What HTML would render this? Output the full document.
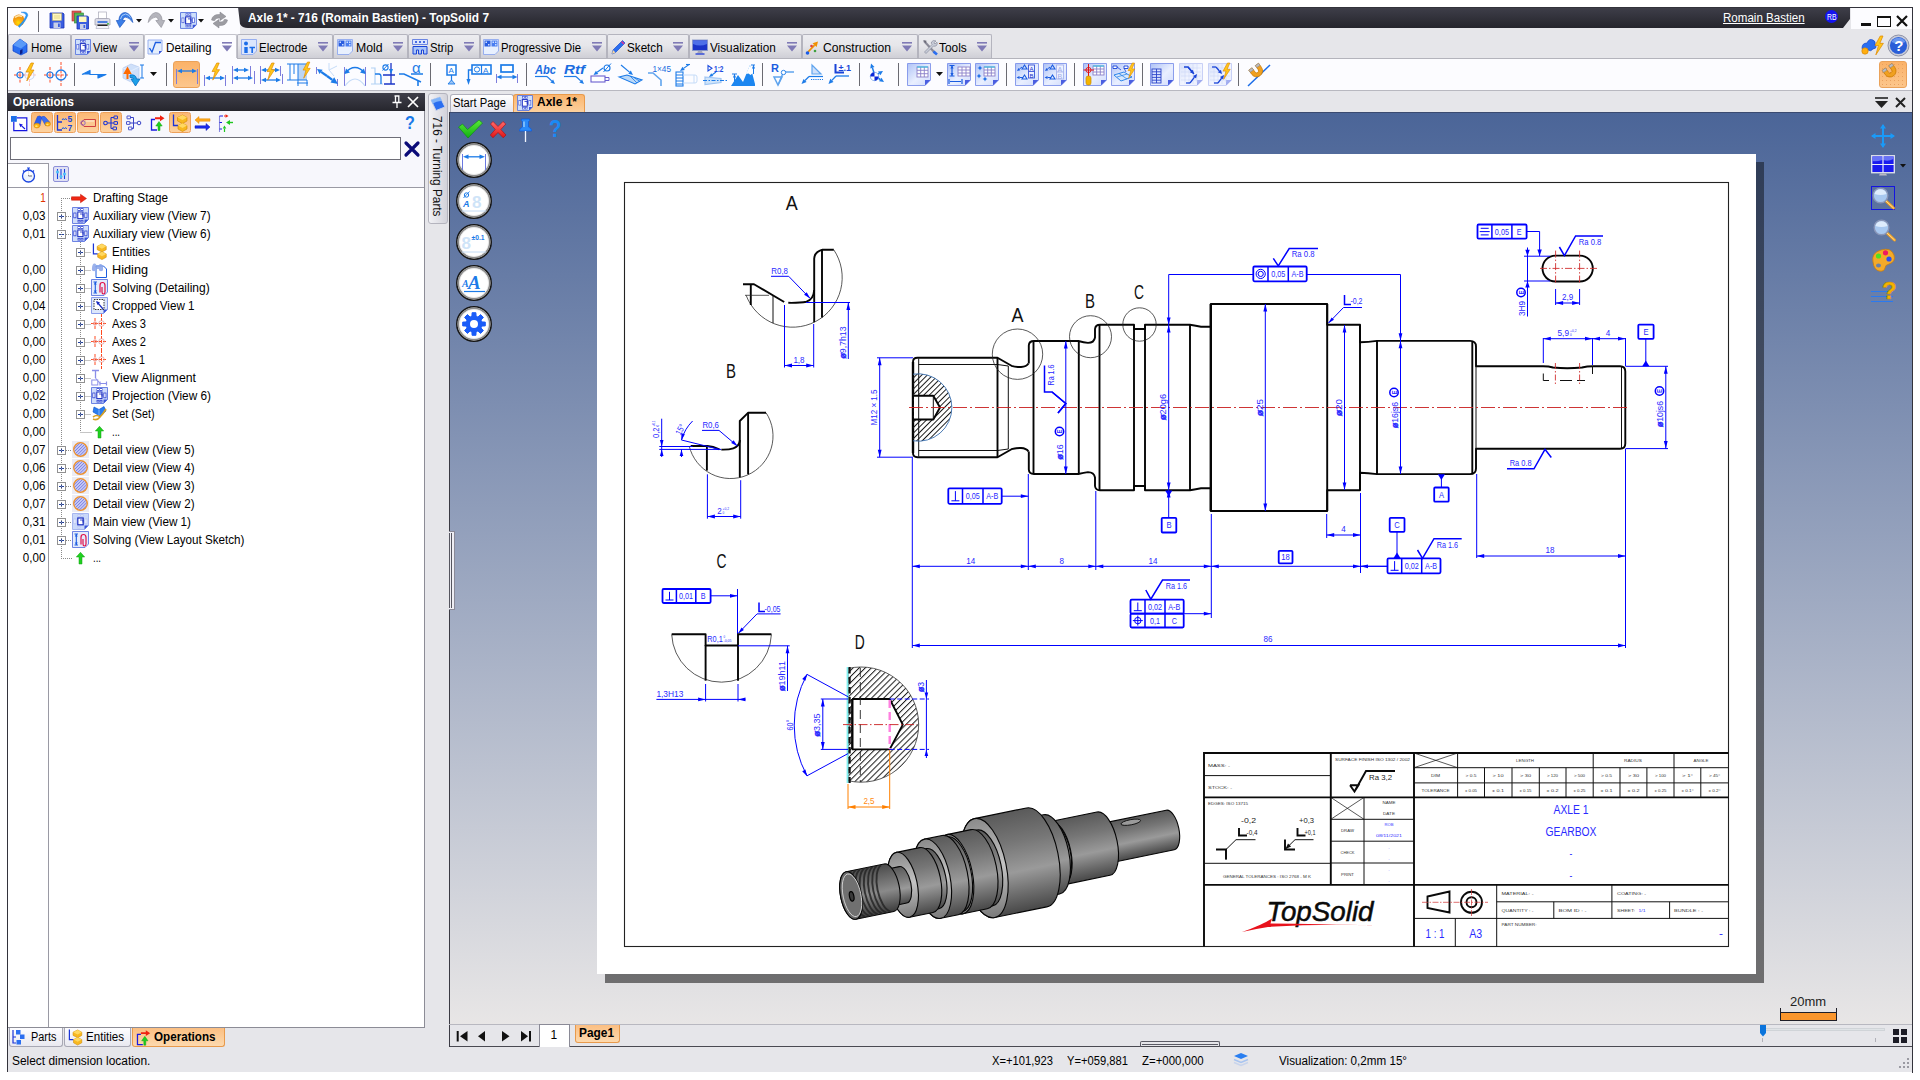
<!DOCTYPE html><html><head><meta charset="utf-8"><title>TopSolid</title><style>
*{box-sizing:border-box;margin:0;padding:0}
html,body{width:1920px;height:1080px;overflow:hidden;background:#fff;font-family:"Liberation Sans",sans-serif;}
.t{position:absolute;white-space:nowrap;display:block}
.a{position:absolute}
svg{position:absolute;overflow:visible}
</style></head><body><div class="a" style="left:7px;top:7px;width:1906px;height:1065px;background:#e6e6ea;"></div>
<div class="a" style="left:7px;top:7px;width:1px;height:1065px;background:#33333b;"></div>
<div class="a" style="left:1911.5px;top:7px;width:1.5px;height:1066px;background:#33333b;"></div>
<div class="a" style="left:8px;top:8px;width:232px;height:26px;background:#fcfcff;"></div>
<svg style="left:230px;top:7px;" width="1630" height="22" viewBox="0 0 1630 22"><defs><linearGradient id="tg" x1="0" y1="0" x2="0" y2="1"><stop offset="0" stop-color="#3f3f4a"/><stop offset="1" stop-color="#25252c"/></linearGradient></defs><path d="M0 0 H1620 V12 L1613 21 H18 Q12 21 10 17 L8 0 Z" fill="url(#tg)"/></svg>
<div class="a" style="left:7px;top:7px;width:1906px;height:1px;background:#33333b;"></div>
<div class="a" style="left:1851px;top:8px;width:61px;height:21px;background:#fcfcff;"></div>
<span class="t" style="top:11.62px;font-size:12.5px;line-height:12.5px;color:#fff;font-weight:bold;left:248.00px;transform-origin:0 0;transform:scaleX(0.9489);">Axle 1* - 716 (Romain Bastien) - TopSolid 7</span>
<span class="t" style="top:12.34px;font-size:12px;line-height:12px;color:#fff;left:1722.70px;transform-origin:0 0;transform:scaleX(0.9633);text-decoration:underline;">Romain Bastien</span>
<div class="a" style="left:1824.5px;top:10px;width:13px;height:13px;background:#1414f0;border-radius:50%;"></div>
<span class="t" style="top:12.80px;font-size:8.5px;line-height:8.5px;color:#fff;left:1826.50px;transform-origin:0 0;transform:scaleX(0.8046);">RB</span>
<div class="a" style="left:1861px;top:23px;width:10px;height:3px;background:#111;"></div>
<div class="a" style="left:1877px;top:16px;width:14px;height:10.5px;border:1.5px solid #111;border-top-width:2.5px;"></div>
<svg style="left:1896px;top:15px;" width="12" height="12" viewBox="0 0 12 12"><path d="M1 1 L11 11 M11 1 L1 11" stroke="#111" stroke-width="2.2" fill="none"/></svg>
<div class="a" style="left:8px;top:34px;width:63px;height:24px;background:linear-gradient(#ececf0,#e6e6ea 45%,#cfcfd6);border:1px solid #b4b4be;border-bottom:none;border-radius:2px 2px 0 0;"></div>
<span class="t" style="top:41.72px;font-size:12.5px;line-height:12.5px;color:#000;left:30.70px;transform-origin:0 0;transform:scaleX(0.9298);">Home</span>
<div class="a" style="left:71px;top:34px;width:73px;height:24px;background:linear-gradient(#ececf0,#e6e6ea 45%,#cfcfd6);border:1px solid #b4b4be;border-bottom:none;border-radius:2px 2px 0 0;"></div>
<span class="t" style="top:41.72px;font-size:12.5px;line-height:12.5px;color:#000;left:93.30px;transform-origin:0 0;transform:scaleX(0.8933);">View</span>
<svg style="left:128.6px;top:42px;" width="10" height="10" viewBox="0 0 10 10"><path d="M0 0.8 H10" stroke="#7f7ab5" stroke-width="1.6"/><path d="M0 3.6 H10 L5 9.4 Z" fill="#7f7ab5"/></svg>
<div class="a" style="left:144px;top:34px;width:93px;height:25px;background:#fcfcff;border:1px solid #c4c4cc;border-bottom:none;border-radius:2px 2px 0 0;"></div>
<span class="t" style="top:41.72px;font-size:12.5px;line-height:12.5px;color:#000;left:165.70px;transform-origin:0 0;transform:scaleX(0.9376);">Detailing</span>
<svg style="left:222px;top:42px;" width="10" height="10" viewBox="0 0 10 10"><path d="M0 0.8 H10" stroke="#7f7ab5" stroke-width="1.6"/><path d="M0 3.6 H10 L5 9.4 Z" fill="#7f7ab5"/></svg>
<div class="a" style="left:237px;top:34px;width:96px;height:24px;background:linear-gradient(#ececf0,#e6e6ea 45%,#cfcfd6);border:1px solid #b4b4be;border-bottom:none;border-radius:2px 2px 0 0;"></div>
<span class="t" style="top:41.72px;font-size:12.5px;line-height:12.5px;color:#000;left:259.30px;transform-origin:0 0;transform:scaleX(0.9166);">Electrode</span>
<svg style="left:318px;top:42px;" width="10" height="10" viewBox="0 0 10 10"><path d="M0 0.8 H10" stroke="#7f7ab5" stroke-width="1.6"/><path d="M0 3.6 H10 L5 9.4 Z" fill="#7f7ab5"/></svg>
<div class="a" style="left:333px;top:34px;width:75px;height:24px;background:linear-gradient(#ececf0,#e6e6ea 45%,#cfcfd6);border:1px solid #b4b4be;border-bottom:none;border-radius:2px 2px 0 0;"></div>
<span class="t" style="top:41.72px;font-size:12.5px;line-height:12.5px;color:#000;left:355.70px;transform-origin:0 0;transform:scaleX(0.9818);">Mold</span>
<svg style="left:393px;top:42px;" width="10" height="10" viewBox="0 0 10 10"><path d="M0 0.8 H10" stroke="#7f7ab5" stroke-width="1.6"/><path d="M0 3.6 H10 L5 9.4 Z" fill="#7f7ab5"/></svg>
<div class="a" style="left:408px;top:34px;width:72px;height:24px;background:linear-gradient(#ececf0,#e6e6ea 45%,#cfcfd6);border:1px solid #b4b4be;border-bottom:none;border-radius:2px 2px 0 0;"></div>
<span class="t" style="top:41.72px;font-size:12.5px;line-height:12.5px;color:#000;left:430.00px;transform-origin:0 0;transform:scaleX(0.9066);">Strip</span>
<svg style="left:464px;top:42px;" width="10" height="10" viewBox="0 0 10 10"><path d="M0 0.8 H10" stroke="#7f7ab5" stroke-width="1.6"/><path d="M0 3.6 H10 L5 9.4 Z" fill="#7f7ab5"/></svg>
<div class="a" style="left:480px;top:34px;width:127px;height:24px;background:linear-gradient(#ececf0,#e6e6ea 45%,#cfcfd6);border:1px solid #b4b4be;border-bottom:none;border-radius:2px 2px 0 0;"></div>
<span class="t" style="top:41.72px;font-size:12.5px;line-height:12.5px;color:#000;left:501.00px;transform-origin:0 0;transform:scaleX(0.9068);">Progressive Die</span>
<svg style="left:591.7px;top:42px;" width="10" height="10" viewBox="0 0 10 10"><path d="M0 0.8 H10" stroke="#7f7ab5" stroke-width="1.6"/><path d="M0 3.6 H10 L5 9.4 Z" fill="#7f7ab5"/></svg>
<div class="a" style="left:607px;top:34px;width:82px;height:24px;background:linear-gradient(#ececf0,#e6e6ea 45%,#cfcfd6);border:1px solid #b4b4be;border-bottom:none;border-radius:2px 2px 0 0;"></div>
<span class="t" style="top:41.72px;font-size:12.5px;line-height:12.5px;color:#000;left:627.00px;transform-origin:0 0;transform:scaleX(0.9342);">Sketch</span>
<svg style="left:673px;top:42px;" width="10" height="10" viewBox="0 0 10 10"><path d="M0 0.8 H10" stroke="#7f7ab5" stroke-width="1.6"/><path d="M0 3.6 H10 L5 9.4 Z" fill="#7f7ab5"/></svg>
<div class="a" style="left:689px;top:34px;width:113px;height:24px;background:linear-gradient(#ececf0,#e6e6ea 45%,#cfcfd6);border:1px solid #b4b4be;border-bottom:none;border-radius:2px 2px 0 0;"></div>
<span class="t" style="top:41.72px;font-size:12.5px;line-height:12.5px;color:#000;left:710.00px;transform-origin:0 0;transform:scaleX(0.9393);">Visualization</span>
<svg style="left:786.7px;top:42px;" width="10" height="10" viewBox="0 0 10 10"><path d="M0 0.8 H10" stroke="#7f7ab5" stroke-width="1.6"/><path d="M0 3.6 H10 L5 9.4 Z" fill="#7f7ab5"/></svg>
<div class="a" style="left:802px;top:34px;width:116px;height:24px;background:linear-gradient(#ececf0,#e6e6ea 45%,#cfcfd6);border:1px solid #b4b4be;border-bottom:none;border-radius:2px 2px 0 0;"></div>
<span class="t" style="top:41.72px;font-size:12.5px;line-height:12.5px;color:#000;left:822.70px;transform-origin:0 0;transform:scaleX(0.9691);">Construction</span>
<svg style="left:901.7px;top:42px;" width="10" height="10" viewBox="0 0 10 10"><path d="M0 0.8 H10" stroke="#7f7ab5" stroke-width="1.6"/><path d="M0 3.6 H10 L5 9.4 Z" fill="#7f7ab5"/></svg>
<div class="a" style="left:918px;top:34px;width:74px;height:24px;background:linear-gradient(#ececf0,#e6e6ea 45%,#cfcfd6);border:1px solid #b4b4be;border-bottom:none;border-radius:2px 2px 0 0;"></div>
<span class="t" style="top:41.72px;font-size:12.5px;line-height:12.5px;color:#000;left:939.00px;transform-origin:0 0;transform:scaleX(0.9493);">Tools</span>
<svg style="left:976.7px;top:42px;" width="10" height="10" viewBox="0 0 10 10"><path d="M0 0.8 H10" stroke="#7f7ab5" stroke-width="1.6"/><path d="M0 3.6 H10 L5 9.4 Z" fill="#7f7ab5"/></svg>
<div class="a" style="left:8px;top:58px;width:1904px;height:33px;background:#fcfcff;border-bottom:1px solid #b8b8c0;"></div>
<div class="a" style="left:8px;top:57.5px;width:136px;height:1px;background:#b4b4bc;"></div>
<div class="a" style="left:237px;top:57.5px;width:1675px;height:1px;background:#b4b4bc;"></div>
<div class="a" style="left:74px;top:63px;width:1px;height:23px;background:#6a6a72;"></div>
<div class="a" style="left:114px;top:63px;width:1px;height:23px;background:#6a6a72;"></div>
<div class="a" style="left:166px;top:63px;width:1px;height:23px;background:#6a6a72;"></div>
<div class="a" style="left:430px;top:63px;width:1px;height:23px;background:#6a6a72;"></div>
<div class="a" style="left:526px;top:63px;width:1px;height:23px;background:#6a6a72;"></div>
<div class="a" style="left:762.3px;top:63px;width:1px;height:23px;background:#6a6a72;"></div>
<div class="a" style="left:859px;top:63px;width:1px;height:23px;background:#6a6a72;"></div>
<div class="a" style="left:898.3px;top:63px;width:1px;height:23px;background:#6a6a72;"></div>
<div class="a" style="left:1006px;top:63px;width:1px;height:23px;background:#6a6a72;"></div>
<div class="a" style="left:1074.3px;top:63px;width:1px;height:23px;background:#6a6a72;"></div>
<div class="a" style="left:1142.3px;top:63px;width:1px;height:23px;background:#6a6a72;"></div>
<div class="a" style="left:1238.3px;top:63px;width:1px;height:23px;background:#6a6a72;"></div>
<div class="a" style="left:38px;top:11px;width:1px;height:21px;background:#6a6a72;"></div>
<svg width="0" height="0" style="left:0;top:0"><defs><linearGradient id="sg" x1="0" y1="0" x2="1" y2="1"><stop offset="0" stop-color="#aec2f6"/><stop offset="0.55" stop-color="#e9efff"/><stop offset="1" stop-color="#cfdafc"/></linearGradient></defs></svg>
<svg style="left:14px;top:62px" width="24" height="24" viewBox="0 0 24 24"><path d="M0 13H11M6 5V21" stroke="#ff3a10" stroke-width="0.9" stroke-dasharray="3 1.2" fill="none"/><circle cx="6" cy="13" r="3" fill="none" stroke="#1c7be8" stroke-width="1.2"/><circle cx="15.5" cy="13" r="4.5" fill="none" stroke="#c6d6f4" stroke-width="1.2"/><path d="M15.5 13V24M11 13H22" stroke="#ffc8c0" stroke-width="1" stroke-dasharray="3 1.2"/><g transform="translate(12,1) scale(1.0)"><path d="M5 0L0 9H3.3L0.8 18L8 7H4.6L7.6 0Z" fill="#ffc61a" stroke="#e08800" stroke-width="0.7" stroke-linejoin="round"/></g></svg>
<svg style="left:44px;top:62px" width="24" height="24" viewBox="0 0 24 24"><path d="M0 13H24M6 5V21M17 0V24" stroke="#ff3a10" stroke-width="0.9" stroke-dasharray="3 1.2" fill="none"/><circle cx="6" cy="13" r="3" fill="none" stroke="#1c7be8" stroke-width="1.2"/><circle cx="17" cy="13" r="5" fill="none" stroke="#1c7be8" stroke-width="1.3"/></svg>
<svg style="left:82px;top:62px" width="24" height="24" viewBox="0 0 24 24"><path d="M0 12.5L8 8.5V12.5H24L16 16V12.5" fill="#1c7be8" stroke="#1c7be8" stroke-width="1.2" stroke-linejoin="round"/></svg>
<svg style="left:121px;top:62px" width="26" height="24" viewBox="0 0 26 24"><path d="M2 6L10 2L18 5V16L10 20L2 16Z" fill="#cfe0fa" stroke="#b4c8ee" stroke-width="0.7"/><path d="M10 9L18 5M10 9L2 6M10 9V20" stroke="#e8f0ff" stroke-width="0.8"/><path d="M6.5 17V10M4 11L6.5 6.5L9 11Z" stroke="#ff6a00" stroke-width="2" fill="#ff6a00"/><path d="M19 3H23M19 16H23M21 3V16" stroke="#1c7be8" stroke-width="1"/><path d="M9 13Q15 12 15.5 17H19L14.5 24L10 17H12.5Q12 15 9 15.5Z" fill="#1ea0e8" stroke="#0a6cc0" stroke-width="0.8"/></svg>
<svg style="left:150px;top:72px" width="8" height="5" viewBox="0 0 8 5"><path d="M0 0H7L3.5 4Z" fill="#111"/></svg>
<div class="a" style="left:173px;top:61px;width:27px;height:27px;background:linear-gradient(#fbb268,#fcc68c);border:1px solid #eaa25a;border-radius:3px"></div>
<svg style="left:175px;top:62px" width="24" height="24" viewBox="0 0 24 24"><path d="M1.5 7V22M22.5 7V22" stroke="#7d7ddc" stroke-width="1"/><path d="M6 9H18" stroke="#1c7be8" stroke-width="1.3"/><path d="M2 9l5 -2.2v4.4zM22 9l-5 -2.2v4.4z" fill="#1c7be8"/></svg>
<svg style="left:203px;top:62px" width="24" height="24" viewBox="0 0 24 24"><path d="M1.5 13V24M22.5 13V24" stroke="#7d7ddc" stroke-width="1"/><path d="M6 16H18" stroke="#1c7be8" stroke-width="1.3"/><path d="M2 16l5 -2.2v4.4zM22 16l-5 -2.2v4.4z" fill="#1c7be8"/><g transform="translate(9,1) scale(0.95)"><path d="M5 0L0 9H3.3L0.8 18L8 7H4.6L7.6 0Z" fill="#ffc61a" stroke="#e08800" stroke-width="0.7" stroke-linejoin="round"/></g></svg>
<svg style="left:231px;top:62px" width="24" height="24" viewBox="0 0 24 24"><path d="M1.5 4V22M19.5 4V15M23.5 9V22" stroke="#7d7ddc" stroke-width="1"/><path d="M6 8H14" stroke="#1c7be8" stroke-width="1.3"/><path d="M2 8l5 -2.2v4.4zM18 8l-5 -2.2v4.4z" fill="#1c7be8"/><path d="M6 16H18" stroke="#1c7be8" stroke-width="1.3"/><path d="M2 16l5 -2.2v4.4zM22 16l-5 -2.2v4.4z" fill="#1c7be8"/></svg>
<svg style="left:259px;top:62px" width="24" height="24" viewBox="0 0 24 24"><path d="M1.5 4V22M21.5 4V14M23.5 12V22" stroke="#7d7ddc" stroke-width="1"/><path d="M6 8H17" stroke="#1c7be8" stroke-width="1.3"/><path d="M2 8l5 -2.2v4.4zM21 8l-5 -2.2v4.4z" fill="#1c7be8"/><path d="M6 18H18" stroke="#1c7be8" stroke-width="1.3"/><path d="M2 18l5 -2.2v4.4zM22 18l-5 -2.2v4.4z" fill="#1c7be8"/><g transform="translate(8,1) scale(0.95)"><path d="M5 0L0 9H3.3L0.8 18L8 7H4.6L7.6 0Z" fill="#ffc61a" stroke="#e08800" stroke-width="0.7" stroke-linejoin="round"/></g></svg>
<svg style="left:287px;top:62px" width="24" height="24" viewBox="0 0 24 24"><rect x="11" y="2" width="9" height="16" fill="#bcd6f6"/><path d="M0 2H20M0 18H11M3 2V18M7 2V12M11 2V24M20 18V24M11 18H20M10 21H21" stroke="#1c7be8" stroke-width="1"/><g transform="translate(16,0) scale(0.9)"><path d="M5 0L0 9H3.3L0.8 18L8 7H4.6L7.6 0Z" fill="#ffc61a" stroke="#e08800" stroke-width="0.7" stroke-linejoin="round"/></g></svg>
<svg style="left:315px;top:62px" width="24" height="24" viewBox="0 0 24 24"><path d="M14 8V1M14 8L22 4M14 8L19 14" stroke="#c6dcf8" stroke-width="1"/><path d="M1.5 5V12M22.5 17V24" stroke="#7d7ddc" stroke-width="1"/><path d="M12 14L17.3 17.9" stroke="#1c7be8" stroke-width="2.2" fill="none"/><path d="M23 22L15.5 20.5L19.2 15.3Z" fill="#1c7be8"/><path d="M12 14L6.1 9.9" stroke="#1c7be8" stroke-width="2.2" fill="none"/><path d="M2 7L7.6 7.7L4.6 12.0Z" fill="#1c7be8"/></svg>
<svg style="left:343px;top:62px" width="24" height="24" viewBox="0 0 24 24"><path d="M1.5 5V24M22.5 5V24" stroke="#7d7ddc" stroke-width="1"/><path d="M2 11Q12 0 22 11" stroke="#1c7be8" stroke-width="1.6" fill="none"/><path d="M1.5 12L3 6.5L7 10.5ZM22.5 12L21 6.5L17 10.5Z" fill="#1c7be8"/><path d="M2 24Q12 10 22 24" stroke="#c6dcf8" stroke-width="1.2" fill="none"/></svg>
<svg style="left:371px;top:62px" width="24" height="24" viewBox="0 0 24 24"><path d="M0 6H4V22M0 22H12" stroke="#b0d0f4" stroke-width="1.2" fill="none" stroke-dasharray="0"/><path d="M4 12H8Q10 12 10 15V22" stroke="#1c7be8" stroke-width="1.3" fill="none"/><path d="M12 13H24M20 1V22M13 22H24" stroke="#1a34c8" stroke-width="1.3"/><circle cx="14.5" cy="5.5" r="2.6" fill="none" stroke="#1c7be8" stroke-width="1.1"/><path d="M11.5 8.5L17.5 2" stroke="#1c7be8" stroke-width="1"/><path d="M20 12l-2 -5h4z" fill="#1c7be8"/></svg>
<svg style="left:399px;top:62px" width="24" height="24" viewBox="0 0 24 24"><text x="13" y="11" font-size="15" fill="#1c7be8" font-family="Liberation Sans">α</text><path d="M0 12H5L22 20M12 12H24" stroke="#1c7be8" stroke-width="1.5" fill="none"/><path d="M19 19V24" stroke="#1c7be8" stroke-width="1.6"/></svg>
<svg style="left:445px;top:62px" width="14" height="24" viewBox="0 0 14 24"><rect x="2" y="3" width="9" height="10" fill="#fff" stroke="#1c7be8" stroke-width="1.5"/><text x="3.6" y="11" font-size="8" fill="#1c7be8" font-family="Liberation Sans">A</text><path d="M6.5 13V19" stroke="#1c7be8" stroke-width="1.2"/><path d="M6.5 18L3 22H10Z" fill="#9cc4f4" stroke="#1c7be8" stroke-width="0.9"/></svg>
<svg style="left:466px;top:62px" width="26" height="24" viewBox="0 0 26 24"><rect x="6" y="3" width="19" height="9" fill="#fff" stroke="#1c7be8" stroke-width="1.6"/><path d="M15.5 3V12" stroke="#1c7be8" stroke-width="1.2"/><circle cx="11" cy="7.5" r="2.6" fill="none" stroke="#1c7be8" stroke-width="1"/><text x="17" y="11" font-size="8" fill="#1c7be8" font-family="Liberation Sans">A</text><path d="M6 8H2.5V18" stroke="#1c7be8" stroke-width="1.4" fill="none"/><path d="M2.5 23L0.5 17H4.5Z" fill="#1c7be8"/></svg>
<svg style="left:495px;top:62px" width="24" height="24" viewBox="0 0 24 24"><rect x="6" y="3" width="12" height="7" fill="#fff" stroke="#1c7be8" stroke-width="1.7"/><path d="M1.5 12V21M22.5 12V21" stroke="#7d7ddc" stroke-width="1"/><path d="M5.5 15H18.5" stroke="#1c7be8" stroke-width="1.3"/><path d="M1.5 15l5 -2.2v4.4zM22.5 15l-5 -2.2v4.4z" fill="#1c7be8"/></svg>
<svg style="left:534px;top:62px" width="24" height="24" viewBox="0 0 24 24"><text x="1" y="12" font-size="13" font-style="italic" font-weight="bold" fill="#1a6ce0" font-family="Liberation Sans" textLength="21" lengthAdjust="spacingAndGlyphs">Abc</text><path d="M1 14.5H13" stroke="#1c7be8" stroke-width="1.2"/><path d="M13 14.5L17.7 18.9" stroke="#1c7be8" stroke-width="1.2" fill="none"/><path d="M21 22L16.3 20.4L19.1 17.5Z" fill="#1c7be8"/></svg>
<svg style="left:563px;top:62px" width="24" height="24" viewBox="0 0 24 24"><text x="1" y="12" font-size="13" font-style="italic" font-weight="bold" fill="#1a6ce0" font-family="Liberation Sans" textLength="21" lengthAdjust="spacingAndGlyphs">Rtf</text><path d="M1 14.5H13" stroke="#1c7be8" stroke-width="1.2"/><path d="M13 14.5L17.7 18.9" stroke="#1c7be8" stroke-width="1.2" fill="none"/><path d="M21 22L16.3 20.4L19.1 17.5Z" fill="#1c7be8"/></svg>
<svg style="left:590px;top:62px" width="24" height="24" viewBox="0 0 24 24"><rect x="1" y="14" width="14" height="6" fill="#fff" stroke="#6a5fd0" stroke-width="1.1"/><path d="M15 15.5H19V18.5H15" stroke="#6a5fd0" stroke-width="1" fill="none"/><circle cx="17" cy="6" r="3" fill="none" stroke="#1c7be8" stroke-width="1.2"/><path d="M13.5 10L21 1.5" stroke="#1c7be8" stroke-width="1"/><path d="M13 6L7.1 10.3" stroke="#1c7be8" stroke-width="1.1" fill="none"/><path d="M3.5 13L5.9 8.7L8.3 11.9Z" fill="#1c7be8"/></svg>
<svg style="left:618px;top:62px" width="24" height="24" viewBox="0 0 24 24"><path d="M1 15L9 13L24 18L17 22Z" fill="#bcd9f8" stroke="#1c7be8" stroke-width="1.1"/><path d="M12 14L19 21M16 15.5L22 19.5" stroke="#1c7be8" stroke-width="0.8"/><path d="M3 3L11.5 10.1" stroke="#1c7be8" stroke-width="1.2" fill="none"/><path d="M15 13L10.3 11.7L12.8 8.6Z" fill="#1c7be8"/></svg>
<svg style="left:648px;top:62px" width="24" height="24" viewBox="0 0 24 24"><text x="4.5" y="10" font-size="9.5" fill="#1a6ce0" font-family="Liberation Sans" textLength="18.5" lengthAdjust="spacingAndGlyphs">1×45</text><path d="M0 11H5L13 18V24" stroke="#5fa4ee" stroke-width="1.6" fill="none"/></svg>
<svg style="left:675px;top:62px" width="24" height="24" viewBox="0 0 24 24"><rect x="1" y="10" width="7" height="14" fill="#fff" stroke="#1c7be8" stroke-width="1.1"/><path d="M1 13H8M1 16H8M1 19H8M1 22H8" stroke="#1c7be8" stroke-width="1"/><path d="M8 13H20Q22 13 22 15V19Q22 21 20 21H8M19 13V21" stroke="#c6dcf8" stroke-width="1" fill="none"/><path d="M14 2.5L8.6 6.4" stroke="#1c7be8" stroke-width="1.1" fill="none"/><path d="M5 9L7.5 4.7L9.8 8.0Z" fill="#1c7be8"/><path d="M11 2.5H15" stroke="#1c7be8" stroke-width="1.1"/></svg>
<svg style="left:703px;top:62px" width="24" height="24" viewBox="0 0 24 24"><path d="M5 3.5V9L9 6.3Z" fill="none" stroke="#1a4ce0" stroke-width="1.1"/><text x="11" y="10" font-size="8.5" font-weight="bold" fill="#1a4ce0" font-family="Liberation Sans" textLength="9.5" lengthAdjust="spacingAndGlyphs">1:2</text><path d="M2 15L18 16.5V20.5L2 22.5Z" fill="#cfe4fa" stroke="#9ec4f2" stroke-width="1.2"/><path d="M0 18.5H24" stroke="#1c7be8" stroke-width="1" stroke-dasharray="4 1.5 1.5 1.5"/><path d="M13 10L9.3 12.7" stroke="#1c7be8" stroke-width="1.1" fill="none"/><path d="M6 15L8.2 11.2L10.3 14.1Z" fill="#1c7be8"/></svg>
<svg style="left:731px;top:62px" width="24" height="24" viewBox="0 0 24 24"><path d="M0 24L7 13L12 20L19 3L24 22V24Z" fill="#1c86f0"/><path d="M15 12L19 3L22 11L19.5 13L17.5 11.5Z" fill="#fff"/><path d="M1 12H6M3.5 12V19M20 3H24M22.5 3V12" stroke="#1c7be8" stroke-width="1"/><path d="M3.5 12l-1.6 3.5h3.2zM22.5 3l-1.6 3.5h3.2z" fill="#1c7be8"/></svg>
<svg style="left:771px;top:62px" width="24" height="24" viewBox="0 0 24 24"><text x="0" y="10" font-size="11" font-weight="bold" fill="#1a5ce0" font-family="Liberation Sans">R</text><path d="M3 15H11L7 23Z" fill="none" stroke="#5fa4ee" stroke-width="1.5"/><path d="M7 23L12.5 10H23" stroke="#5fa4ee" stroke-width="1.4" fill="none"/><circle cx="12.5" cy="10.5" r="2.2" fill="#fff" stroke="#1c7be8" stroke-width="0.9"/></svg>
<svg style="left:801px;top:62px" width="24" height="24" viewBox="0 0 24 24"><path d="M11 12V3L20 12Z" fill="#cfe0fa" stroke="#5fa4ee" stroke-width="1.2"/><path d="M8 14.5H22" stroke="#1c7be8" stroke-width="1.2"/><path d="M10 17.5H22" stroke="#1c7be8" stroke-width="1" stroke-dasharray="1.2 1"/><path d="M8 14.5L4.0 18.5" stroke="#1c7be8" stroke-width="1.2" fill="none"/><path d="M0.5 22L2.5 16.9L5.6 20.0Z" fill="#1c7be8"/></svg>
<svg style="left:828px;top:62px" width="24" height="24" viewBox="0 0 24 24"><path d="M7.5 2V10.5H16" stroke="#1a44d8" stroke-width="2" fill="none"/><text x="10.5" y="8.5" font-size="8.5" font-weight="bold" fill="#1a44d8" font-family="Liberation Sans" textLength="12.5" lengthAdjust="spacingAndGlyphs">±.1</text><path d="M8 14H21" stroke="#1c7be8" stroke-width="1.3"/><path d="M8 14L3.9 18.4" stroke="#1c7be8" stroke-width="1.3" fill="none"/><path d="M0.5 22L2.3 16.8L5.5 19.9Z" fill="#1c7be8"/></svg>
<svg style="left:866px;top:62px" width="22" height="24" viewBox="0 0 22 24"><path d="M9 14L6.4 5.8" stroke="#1c7be8" stroke-width="1.5" fill="none"/><path d="M5 1.5L8.5 5.1L4.3 6.5Z" fill="#1c7be8"/><path d="M9 14L13.2 11.4" stroke="#1c7be8" stroke-width="1.5" fill="none"/><path d="M17 9L14.4 13.3L12.0 9.5Z" fill="#1c7be8"/><path d="M9 14L14.3 17.5" stroke="#1c7be8" stroke-width="1.5" fill="none"/><path d="M18 20L13.0 19.3L15.5 15.7Z" fill="#1c7be8"/><circle cx="8.5" cy="14.5" r="4.2" fill="#fff" stroke="#7aa8e8" stroke-width="0.8"/><path d="M8.5 14.5V10.3A4.2 4.2 0 0 0 4.3 14.5ZM8.5 14.5V18.7A4.2 4.2 0 0 0 12.7 14.5Z" fill="#0a28d8"/></svg>
<svg style="left:907px;top:62px" width="24" height="24" viewBox="0 0 24 24"><path d="M0.5 1.5H23.5V18L18 23.5H0.5Z" fill="url(#sg)" stroke="#7f93ea" stroke-width="0.9" opacity="1"/><path d="M23.5 18H18V23.5Z" fill="#4a5ee0" opacity="1"/><rect x="10" y="5" width="11" height="10" fill="#fff" stroke="#8a7fc8" stroke-width="0.9"/><path d="M13.7 5v10" stroke="#8a7fc8" stroke-width="0.9"/><path d="M17.3 5v10" stroke="#8a7fc8" stroke-width="0.9"/><path d="M10 8.3h11" stroke="#8a7fc8" stroke-width="0.9"/><path d="M10 11.7h11" stroke="#8a7fc8" stroke-width="0.9"/><path d="M10 5h11" stroke="#40c0e0" stroke-width="1.2"/></svg>
<svg style="left:935.5px;top:72px" width="8" height="5" viewBox="0 0 8 5"><path d="M0 0H7L3.5 4Z" fill="#111"/></svg>
<svg style="left:947px;top:62px" width="24" height="24" viewBox="0 0 24 24"><path d="M0.5 1.5H23.5V18L18 23.5H0.5Z" fill="url(#sg)" stroke="#7f93ea" stroke-width="0.9" opacity="1"/><path d="M23.5 18H18V23.5Z" fill="#4a5ee0" opacity="1"/><rect x="11" y="5" width="12" height="9" fill="#fff" stroke="#8a7fc8" stroke-width="0.9"/><path d="M15.0 5v9" stroke="#8a7fc8" stroke-width="0.9"/><path d="M19.0 5v9" stroke="#8a7fc8" stroke-width="0.9"/><path d="M11 8.0h12" stroke="#8a7fc8" stroke-width="0.9"/><path d="M11 11.0h12" stroke="#8a7fc8" stroke-width="0.9"/><path d="M2.5 3.5H7.5M2.5 14H7.5M5 3.5V14M2 17V22M15 17V22M3 19.5H14" stroke="#1a5ce0" stroke-width="1.2"/><path d="M5 3.5l-1.6 3h3.2zM5 14l-1.6 -3h3.2z" fill="#1a5ce0"/></svg>
<svg style="left:975px;top:62px" width="24" height="24" viewBox="0 0 24 24"><path d="M0.5 1.5H23.5V18L18 23.5H0.5Z" fill="url(#sg)" stroke="#7f93ea" stroke-width="0.9" opacity="1"/><path d="M23.5 18H18V23.5Z" fill="#4a5ee0" opacity="1"/><rect x="9" y="5" width="11" height="9" fill="#fff" stroke="#8a7fc8" stroke-width="0.9"/><path d="M12.7 5v9" stroke="#8a7fc8" stroke-width="0.9"/><path d="M16.3 5v9" stroke="#8a7fc8" stroke-width="0.9"/><path d="M9 8.0h11" stroke="#8a7fc8" stroke-width="0.9"/><path d="M9 11.0h11" stroke="#8a7fc8" stroke-width="0.9"/><path d="M9 5h11" stroke="#40c0e0" stroke-width="1.2"/><path d="M5 3.5L5.8 5.2L7.5 6L5.8 6.8L5 8.5L4.2 6.8L2.5 6L4.2 5.2Z" fill="#1a6ce8"/><path d="M4 11.5L4.8 13.2L6.5 14L4.8 14.8L4 16.5L3.2 14.8L1.5 14L3.2 13.2Z" fill="#1a6ce8"/><path d="M10 14.5L10.8 16.2L12.5 17L10.8 17.8L10 19.5L9.2 17.8L7.5 17L9.2 16.2Z" fill="#1a6ce8"/></svg>
<svg style="left:1015px;top:62px" width="24" height="24" viewBox="0 0 24 24"><path d="M0.5 1.5H23.5V18L18 23.5H0.5Z" fill="url(#sg)" stroke="#7f93ea" stroke-width="0.9" opacity="1"/><path d="M23.5 18H18V23.5Z" fill="#4a5ee0" opacity="1"/><rect x="13.5" y="3" width="6" height="13" fill="#eef2ff" stroke="#3a54d8" stroke-width="0.9"/><path d="M13.5 9.5h6" stroke="#3a54d8" stroke-width="0.9"/><text x="14.6" y="9" font-size="6" fill="#1a34c8" font-family="Liberation Sans">A</text><text x="14.6" y="15.5" font-size="6" fill="#1a34c8" font-family="Liberation Sans">B</text><path d="M7 7l2.5 -4l2.5 4zM7 17l2.5 -4l2.5 4z" fill="none" stroke="#1a5ce0" stroke-width="1.1"/><path d="M7 5L4.3 7.1" stroke="#1a5ce0" stroke-width="1" fill="none"/><path d="M2 9L3.4 6.0L5.3 8.3Z" fill="#1a5ce0"/><path d="M8 15.5L4.5 15.5" stroke="#1a5ce0" stroke-width="1" fill="none"/><path d="M1.5 15.5L4.5 14.0L4.5 17.0Z" fill="#1a5ce0"/></svg>
<svg style="left:1043px;top:62px" width="24" height="24" viewBox="0 0 24 24"><path d="M0.5 1.5H23.5V18L18 23.5H0.5Z" fill="url(#sg)" stroke="#7f93ea" stroke-width="0.9" opacity="1"/><path d="M23.5 18H18V23.5Z" fill="#4a5ee0" opacity="1"/><rect x="13.5" y="3" width="7" height="14" fill="#eef2ff" stroke="#a8b4ee" stroke-width="0.9"/><path d="M13.5 10h7" stroke="#a8b4ee" stroke-width="0.9"/><text x="14.4" y="9.5" font-size="7" fill="#a0acea" font-family="Liberation Sans">A</text><text x="14.4" y="16.5" font-size="7" fill="#a0acea" font-family="Liberation Sans">B</text><path d="M7 7l2.5 -4l2.5 4zM7 17l2.5 -4l2.5 4z" fill="none" stroke="#1a5ce0" stroke-width="1.1"/><path d="M7 5L4.3 7.1" stroke="#1a5ce0" stroke-width="1" fill="none"/><path d="M2 9L3.4 6.0L5.3 8.3Z" fill="#1a5ce0"/><path d="M8 15.5L4.5 15.5" stroke="#1a5ce0" stroke-width="1" fill="none"/><path d="M1.5 15.5L4.5 14.0L4.5 17.0Z" fill="#1a5ce0"/></svg>
<svg style="left:1083px;top:62px" width="24" height="24" viewBox="0 0 24 24"><path d="M0.5 1.5H23.5V18L18 23.5H0.5Z" fill="url(#sg)" stroke="#7f93ea" stroke-width="0.9" opacity="1"/><path d="M23.5 18H18V23.5Z" fill="#4a5ee0" opacity="1"/><rect x="10" y="4" width="11" height="9" fill="#fff" stroke="#8a7fc8" stroke-width="0.9"/><path d="M13.7 4v9" stroke="#8a7fc8" stroke-width="0.9"/><path d="M17.3 4v9" stroke="#8a7fc8" stroke-width="0.9"/><path d="M10 7.0h11" stroke="#8a7fc8" stroke-width="0.9"/><path d="M10 10.0h11" stroke="#8a7fc8" stroke-width="0.9"/><path d="M10 4h11" stroke="#40c0e0" stroke-width="1.2"/><circle cx="5.5" cy="8" r="2.6" fill="none" stroke="#e01010" stroke-width="0.9"/><path d="M0.5 8H11M5.5 2V14" stroke="#e01010" stroke-width="1"/><rect x="3" y="14" width="5" height="9" rx="2.2" fill="#f4b400" stroke="#c88a00" stroke-width="0.7"/></svg>
<svg style="left:1111px;top:62px" width="24" height="24" viewBox="0 0 24 24"><path d="M0.5 1.5H23.5V18L18 23.5H0.5Z" fill="url(#sg)" stroke="#7f93ea" stroke-width="0.9" opacity="1"/><path d="M23.5 18H18V23.5Z" fill="#4a5ee0" opacity="1"/><path d="M3 13L13 10L21 15L10 19Z" fill="#d8e8fc" stroke="#1c7be8" stroke-width="0.9"/><path d="M8 11.5L16 17M6 15L16 12" stroke="#1c7be8" stroke-width="0.7"/><path d="M2 4H6V6.5H2ZM13 4H17V6.5H13Z" fill="#fff" stroke="#1a44d8" stroke-width="0.9"/><path d="M6 5L10 8M13 6L15 10" stroke="#1a44d8" stroke-width="0.8"/><g transform="translate(17,1) scale(0.85)"><path d="M5 0L0 9H3.3L0.8 18L8 7H4.6L7.6 0Z" fill="#ffc61a" stroke="#e08800" stroke-width="0.7" stroke-linejoin="round"/></g></svg>
<svg style="left:1150px;top:62px" width="24" height="24" viewBox="0 0 24 24"><path d="M0.5 1.5H23.5V18L18 23.5H0.5Z" fill="url(#sg)" stroke="#7f93ea" stroke-width="0.9" opacity="1"/><path d="M23.5 18H18V23.5Z" fill="#4a5ee0" opacity="1"/><rect x="2" y="7" width="9" height="14" fill="#dbe4ff" stroke="#2a44c8" stroke-width="0.9"/><path d="M6.5 7v14" stroke="#2a44c8" stroke-width="0.9"/><path d="M2 9.8h9" stroke="#2a44c8" stroke-width="0.9"/><path d="M2 12.6h9" stroke="#2a44c8" stroke-width="0.9"/><path d="M2 15.4h9" stroke="#2a44c8" stroke-width="0.9"/><path d="M2 18.2h9" stroke="#2a44c8" stroke-width="0.9"/></svg>
<svg style="left:1179px;top:62px" width="24" height="24" viewBox="0 0 24 24"><path d="M0.5 1.5H23.5V18L18 23.5H0.5Z" fill="url(#sg)" stroke="#7f93ea" stroke-width="0.9" opacity="0.45"/><path d="M23.5 18H18V23.5Z" fill="#4a5ee0" opacity="0.45"/><path d="M2 6H22M2 10H22M2 14H22M2 18H18M6 2V22M10 2V22M14 2V22M18 2V20" stroke="#c4d0f4" stroke-width="0.5"/><path d="M5 5H9L15 12" stroke="#1a44d8" stroke-width="1.3" fill="none"/><path d="M9 5L12.4 9.0" stroke="#1a44d8" stroke-width="1.3" fill="none"/><path d="M15 12L10.9 10.3L13.9 7.7Z" fill="#1a44d8"/><path d="M7 21H11" stroke="#1a44d8" stroke-width="1.3"/><path d="M11 21L15.5 15.2" stroke="#1a44d8" stroke-width="1.3" fill="none"/><path d="M18 12L17.1 16.4L14.0 13.9Z" fill="#1a44d8"/></svg>
<svg style="left:1208px;top:62px" width="24" height="24" viewBox="0 0 24 24"><path d="M0.5 1.5H23.5V18L18 23.5H0.5Z" fill="url(#sg)" stroke="#7f93ea" stroke-width="0.9" opacity="0.45"/><path d="M23.5 18H18V23.5Z" fill="#4a5ee0" opacity="0.45"/><path d="M2 6H22M2 10H22M2 14H22M2 18H18M6 2V22M10 2V22M14 2V22M18 2V20" stroke="#c4d0f4" stroke-width="0.5"/><path d="M4 5H8" stroke="#1a44d8" stroke-width="1.3" fill="none"/><path d="M8 5L11.4 9.0" stroke="#1a44d8" stroke-width="1.3" fill="none"/><path d="M14 12L9.9 10.3L12.9 7.7Z" fill="#1a44d8"/><path d="M6 21H10" stroke="#1a44d8" stroke-width="1.3"/><path d="M10 21L13.6 16.2" stroke="#1a44d8" stroke-width="1.3" fill="none"/><path d="M16 13L15.2 17.4L12.0 15.0Z" fill="#1a44d8"/><g transform="translate(15,1) scale(0.9)"><path d="M5 0L0 9H3.3L0.8 18L8 7H4.6L7.6 0Z" fill="#ffc61a" stroke="#e08800" stroke-width="0.7" stroke-linejoin="round"/></g></svg>
<svg style="left:1247px;top:62px" width="24" height="24" viewBox="0 0 24 24"><path d="M1 24L23 3" stroke="#1a6ce8" stroke-width="1.5"/><g transform="rotate(-35 9 8)"><path d="M3 4V9A6 6 0 0 0 15 9V4H11V9A2 2 0 0 1 7 9V4Z" fill="#f0a020" stroke="#c87800" stroke-width="0.7"/><path d="M3 4H7V6.5H3ZM11 4H15V6.5H11Z" fill="#bcbcc4" stroke="#888" stroke-width="0.5"/></g></svg>
<div class="a" style="left:1879px;top:61px;width:27.5px;height:27px;background:linear-gradient(#fbb268,#fcc68c);border:1px solid #eaa25a;border-radius:3px"></div>
<svg style="left:1881px;top:63px" width="24" height="24" viewBox="0 0 24 24"><g fill="#e8a060"><rect x="1" y="1" width="1" height="1"/><rect x="1" y="5" width="1" height="1"/><rect x="1" y="9" width="1" height="1"/><rect x="1" y="13" width="1" height="1"/><rect x="1" y="17" width="1" height="1"/><rect x="1" y="21" width="1" height="1"/><rect x="5" y="1" width="1" height="1"/><rect x="5" y="5" width="1" height="1"/><rect x="5" y="9" width="1" height="1"/><rect x="5" y="13" width="1" height="1"/><rect x="5" y="17" width="1" height="1"/><rect x="5" y="21" width="1" height="1"/><rect x="9" y="1" width="1" height="1"/><rect x="9" y="5" width="1" height="1"/><rect x="9" y="9" width="1" height="1"/><rect x="9" y="13" width="1" height="1"/><rect x="9" y="17" width="1" height="1"/><rect x="9" y="21" width="1" height="1"/><rect x="13" y="1" width="1" height="1"/><rect x="13" y="5" width="1" height="1"/><rect x="13" y="9" width="1" height="1"/><rect x="13" y="13" width="1" height="1"/><rect x="13" y="17" width="1" height="1"/><rect x="13" y="21" width="1" height="1"/><rect x="17" y="1" width="1" height="1"/><rect x="17" y="5" width="1" height="1"/><rect x="17" y="9" width="1" height="1"/><rect x="17" y="13" width="1" height="1"/><rect x="17" y="17" width="1" height="1"/><rect x="17" y="21" width="1" height="1"/><rect x="21" y="1" width="1" height="1"/><rect x="21" y="5" width="1" height="1"/><rect x="21" y="9" width="1" height="1"/><rect x="21" y="13" width="1" height="1"/><rect x="21" y="17" width="1" height="1"/><rect x="21" y="21" width="1" height="1"/></g><g transform="rotate(-35 9 8)"><path d="M3 3V8A6 6 0 0 0 15 8V3H11V8A2 2 0 0 1 7 8V3Z" fill="#f0a020" stroke="#c87800" stroke-width="0.7"/><path d="M3 3H7V5.5H3ZM11 3H15V5.5H11Z" fill="#bcbcc4" stroke="#888" stroke-width="0.5"/></g></svg>
<svg style="left:1860px;top:34px" width="24" height="24" viewBox="0 0 24 24"><path d="M2 14Q2 9 7 9Q9 4 13 6Q16 7 15 11Q18 14 13 15Q11 18 8 16Q2 18 2 14Z" fill="#2a6ef0" stroke="#0a3ec8" stroke-width="0.6"/><circle cx="5" cy="17" r="3.2" fill="#ffae10" stroke="#d08000" stroke-width="0.6"/><g transform="translate(15,2) scale(1.05)"><path d="M5 0L0 9H3.3L0.8 18L8 7H4.6L7.6 0Z" fill="#ffc61a" stroke="#e08800" stroke-width="0.7" stroke-linejoin="round"/></g></svg>
<svg style="left:1887px;top:34px" width="23" height="23" viewBox="0 0 23 23"><circle cx="11.5" cy="11.5" r="10.5" fill="#c9ccd8" stroke="#8e92a8" stroke-width="1"/><circle cx="11.5" cy="11.5" r="8.6" fill="#2a5ed8"/><path d="M4.5 8A8 8 0 0 1 18.5 8Q11.5 11 4.5 8Z" fill="#7aa4f4" opacity="0.8"/><text x="7.3" y="17" font-size="15" font-weight="bold" fill="#fff" font-family="Liberation Sans">?</text></svg>
<svg style="left:12px;top:9px" width="20" height="22" viewBox="0 0 20 22"><defs><radialGradient id="lg" cx="0.45" cy="0.7" r="0.7"><stop offset="0" stop-color="#ffe000"/><stop offset="0.5" stop-color="#f6a010"/><stop offset="1" stop-color="#e88a10"/></radialGradient></defs><circle cx="6.8" cy="11.3" r="5.8" fill="url(#lg)"/><path d="M3 8.5Q6 5.5 10 7.5" stroke="#ffeec0" stroke-width="1.6" fill="none" opacity="0.9"/><path d="M9 3.2Q16 2 15.8 6.5Q14 12 7.5 18.5L6.2 17.2Q12.5 11.5 14 6.5Q14.3 4 9 3.2Z" fill="#2a9af4" stroke="#1a7ae0" stroke-width="0.4"/></svg>
<svg style="left:49px;top:11px" width="16" height="18" viewBox="0 0 16 18"><path d="M1 2H14L15 3V17H1Z" fill="#3a5ee0" stroke="#1a34b8" stroke-width="0.8"/><rect x="3.5" y="2.5" width="9" height="7" fill="#fff8c0" stroke="#c8b860" stroke-width="0.5"/><path d="M5 5H11M5 7H11" stroke="#d8c870" stroke-width="0.7"/><rect x="4.5" y="11.5" width="7" height="5.5" fill="#c8d0e8"/><rect x="9" y="12.5" width="1.8" height="3.5" fill="#3a5ee0"/></svg>
<svg style="left:71px;top:10px" width="19" height="21" viewBox="0 0 19 21"><rect x="1" y="1" width="9" height="10" fill="#e05858" stroke="#a83030" stroke-width="0.6"/><rect x="3.5" y="3" width="9" height="10" fill="#58b858" stroke="#308030" stroke-width="0.6"/><path d="M6 6H16.5L17.5 7V19H6Z" fill="#3a5ee0" stroke="#1a34b8" stroke-width="0.8"/><rect x="8" y="6.5" width="7.5" height="5.5" fill="#fff8c0"/><rect x="9" y="14" width="6" height="5" fill="#c8d0e8"/><rect x="12.5" y="15" width="1.6" height="3" fill="#3a5ee0"/></svg>
<svg style="left:94px;top:11px" width="17" height="19" viewBox="0 0 17 19"><rect x="4.5" y="1" width="8" height="7" fill="#fff" stroke="#a8a8b8" stroke-width="0.7"/><path d="M1 9Q1 7.5 2.5 7.5H14.5Q16 7.5 16 9V14H1Z" fill="#dcdce8" stroke="#9898a8" stroke-width="0.7"/><rect x="3.5" y="10" width="10" height="2" fill="#4a7ee0"/><path d="M3 14H14L15 17.5H2Z" fill="#f4f4fa" stroke="#a8a8b8" stroke-width="0.6"/><rect x="13" y="12.2" width="2" height="1.2" fill="#30c030"/><rect x="3.5" y="13.6" width="10" height="1.3" fill="#111"/></svg>
<svg style="left:116px;top:11px" width="18" height="18" viewBox="0 0 18 18"><path d="M3.8 16.5L0.3 9.5H2.8Q3.5 1.5 9.5 1.5Q15.5 3 16.8 11.5Q13 5.8 9 6Q6.8 6.6 6.6 9.5H9.2Z" fill="#3a7ee8" stroke="#1a54c0" stroke-width="0.7" stroke-linejoin="round"/><path d="M4.5 8Q5 3.5 9.5 3Q13 3.5 14.5 6.5" stroke="#a8ccf8" stroke-width="1" fill="none"/></svg>
<svg style="left:136px;top:19px" width="7" height="4" viewBox="0 0 7 4"><path d="M0 0H6L3 3.5Z" fill="#111"/></svg>
<svg style="left:147px;top:11px" width="18" height="18" viewBox="0 0 18 18"><path d="M14.2 16.5L17.7 9.5H15.2Q14.5 1.5 8.5 1.5Q2.5 3 1.2 11.5Q5 5.8 9 6Q11.2 6.6 11.4 9.5H8.8Z" fill="#b4b4bc" stroke="#94949c" stroke-width="0.7" stroke-linejoin="round"/></svg>
<svg style="left:168px;top:19px" width="7" height="4" viewBox="0 0 7 4"><path d="M0 0H6L3 3.5Z" fill="#111"/></svg>
<svg style="left:180px;top:12px" width="16.96" height="16.96" viewBox="0 0 16 16"><path d="M0.5 0.5H15.5V12L12 15.5H0.5Z" fill="#cfe0fb" stroke="#5f7be0" stroke-width="0.9"/><path d="M15.5 12H12V15.5Z" fill="#3a54d8"/><rect x="5.3" y="4.6" width="5" height="6.6" fill="#fff" stroke="#1a2cc0" stroke-width="1"/><path d="M7.5 6.5H10.3V9" stroke="#1a2cc0" stroke-width="0.8" fill="none"/><g fill="#fff" stroke="#4a5ed8" stroke-width="0.7"><rect x="1.8" y="5.6" width="2" height="4.5"/><rect x="11.8" y="5.6" width="2" height="4.5"/><rect x="5.6" y="1.6" width="1.8" height="1.6"/><rect x="8.4" y="1.6" width="1.8" height="1.6"/><rect x="5.6" y="12.5" width="1.8" height="1.6"/><rect x="8.4" y="12.5" width="1.8" height="1.6"/></g></svg>
<svg style="left:197.5px;top:19px" width="7" height="4" viewBox="0 0 7 4"><path d="M0 0H6L3 3.5Z" fill="#111"/></svg>
<svg style="left:210px;top:11px" width="19" height="18" viewBox="0 0 19 18"><path d="M1.5 9Q2.5 3 10 3.5V1L16 5.5L10 9.5V7Q5.5 6.5 4.5 9.8Z" fill="#9c9ca2" stroke="#808088" stroke-width="0.5"/><path d="M17.5 9Q16.5 15 9 14.5V17L3 12.5L9 8.5V11Q13.5 11.5 14.5 8.2Z" fill="#9c9ca2" stroke="#808088" stroke-width="0.5"/></svg>
<svg style="left:12px;top:38px" width="16" height="18" viewBox="0 0 16 18"><path d="M1 7L8 1L15 6V14L9 17L1 13Z" fill="#2a6ef0" stroke="#0a3ec8" stroke-width="0.7"/><path d="M1 7L8 1L15 6L9 10.5Z" fill="#5a9af8"/><path d="M8 12.5V16.5L10.5 15.2V11Z" fill="#0a1e88"/></svg>
<svg style="left:75px;top:39px" width="16.0" height="16.0" viewBox="0 0 16 16"><path d="M0.5 0.5H15.5V12L12 15.5H0.5Z" fill="#cfe0fb" stroke="#5f7be0" stroke-width="0.9"/><path d="M15.5 12H12V15.5Z" fill="#3a54d8"/><rect x="5.3" y="4.6" width="5" height="6.6" fill="#fff" stroke="#1a2cc0" stroke-width="1"/><path d="M7.5 6.5H10.3V9" stroke="#1a2cc0" stroke-width="0.8" fill="none"/><g fill="#fff" stroke="#4a5ed8" stroke-width="0.7"><rect x="1.8" y="5.6" width="2" height="4.5"/><rect x="11.8" y="5.6" width="2" height="4.5"/><rect x="5.6" y="1.6" width="1.8" height="1.6"/><rect x="8.4" y="1.6" width="1.8" height="1.6"/><rect x="5.6" y="12.5" width="1.8" height="1.6"/><rect x="8.4" y="12.5" width="1.8" height="1.6"/></g></svg>
<svg style="left:147px;top:39px" width="16" height="16" viewBox="0 0 16 16"><path d="M1 1H15V12L12 15H1Z" fill="#e4eefc" stroke="#8fa8ee" stroke-width="0.9" transform="translate(0,0)"/><path d="M15 12H12V15Z" fill="#3a54d8"/><path d="M2.5 9L5 13L8.5 3.5H14" stroke="#1a5ce0" stroke-width="1.3" fill="none"/></svg>
<svg style="left:241px;top:39px" width="16" height="16" viewBox="0 0 16 16"><path d="M0.5 0.5H15.5V12L12 15.5H0.5Z" fill="#dbe6fd" stroke="#8fa8ee" stroke-width="0.9"/><circle cx="5" cy="4.5" r="2" fill="#1a6ce8"/><path d="M3.3 8H6.7V14H3.3Z" fill="#1a6ce8"/><path d="M8.5 8.5H14M11.2 8.5V14" stroke="#1a6ce8" stroke-width="1.7"/></svg>
<svg style="left:336.5px;top:39px" width="16" height="16" viewBox="0 0 16 16"><path d="M0.5 0.5H15.5V12L12 15.5H0.5Z" fill="#e8f0fe" stroke="#8fa8ee" stroke-width="0.9"/><rect x="1.5" y="1.5" width="6" height="6" fill="#2a5ee0"/><rect x="8.5" y="1.5" width="6" height="6" fill="#4a7ef0"/><g fill="#cfe0ff"><rect x="2.5" y="2.5" width="1.5" height="1.5"/><rect x="5" y="5" width="1.5" height="1.5"/><rect x="9.5" y="2.5" width="1.5" height="1.5"/><rect x="12" y="5" width="1.5" height="1.5"/><rect x="12" y="2.5" width="1.5" height="1.5"/></g></svg>
<svg style="left:411.5px;top:39px" width="16" height="16" viewBox="0 0 16 16"><path d="M0.5 0.5H15.5V5.5H0.5Z" fill="#dbe6fd" stroke="#5f7be0" stroke-width="0.9"/><path d="M3 3H5M7 3H9M11 3H13" stroke="#1a44d8" stroke-width="1.5"/><path d="M1 7.5H15V15H11.5V11H9.5V15H6.5V11H4.5V15H1Z" fill="#a8c4f8" stroke="#1a44d8" stroke-width="1"/></svg>
<svg style="left:483px;top:39px" width="16" height="16" viewBox="0 0 16 16"><path d="M0.5 0.5H15.5V12L12 15.5H0.5Z" fill="#e8f0fe" stroke="#8fa8ee" stroke-width="0.9"/><rect x="1.5" y="1.5" width="6" height="6" fill="#2a5ee0"/><rect x="8.5" y="1.5" width="6" height="6" fill="#4a7ef0"/><g fill="#cfe0ff"><rect x="2.5" y="2.5" width="1.5" height="1.5"/><rect x="5" y="5" width="1.5" height="1.5"/><rect x="9.5" y="2.5" width="1.5" height="1.5"/><rect x="12" y="5" width="1.5" height="1.5"/><rect x="12" y="2.5" width="1.5" height="1.5"/></g></svg>
<svg style="left:610px;top:39px" width="16" height="16" viewBox="0 0 16 16"><path d="M2 15L3 11L12.5 1.5L15 4L5.5 13.5Z" fill="#2a6ef0" stroke="#0a3ec8" stroke-width="0.6"/><path d="M2 15L3 11L5.5 13.5Z" fill="#f8d8a0"/><path d="M11.5 2.5L14 5" stroke="#e03090" stroke-width="1.5"/></svg>
<svg style="left:692px;top:39px" width="16" height="16" viewBox="0 0 16 16"><rect x="0.5" y="1" width="15" height="10.5" fill="#1a34c8" stroke="#8898c8" stroke-width="0.9"/><path d="M1 1.5H15V5Q8 8 1 5Z" fill="#5a7ef0" opacity="0.8"/><path d="M6 12H10L11 14.5H5Z" fill="#a8a8b8"/><path d="M3.5 15H12.5" stroke="#2a44d8" stroke-width="1.4"/></svg>
<svg style="left:805px;top:39px" width="16" height="16" viewBox="0 0 16 16"><path d="M3 13L9.6 6.1" stroke="#f09000" stroke-width="1.8" fill="none"/><path d="M13 2.5L11.6 8.1L7.5 4.2Z" fill="#f09000"/><circle cx="2.5" cy="14" r="1.8" fill="#1a5ce8"/><circle cx="6.5" cy="7" r="1.3" fill="#e04040"/><circle cx="10" cy="12" r="1.3" fill="#40a040"/></svg>
<svg style="left:921.5px;top:39px" width="16" height="16" viewBox="0 0 16 16"><path d="M2 2L13 14" stroke="#8a8a98" stroke-width="2.2"/><path d="M1 1.2L4.5 1.8L3.8 4.2Z" fill="#6a6a78"/><path d="M11.5 12.5L15 15.5" stroke="#2a6ef0" stroke-width="2.6"/><path d="M14 2Q11 0.5 9.5 3Q9 4.5 10 5.5L2.5 13L4 14.5L11.5 7Q13 7.8 14.5 6.5Q15.8 5 15 3.2L13 5L11.8 3.8Z" fill="#c8ccd8" stroke="#7a7e90" stroke-width="0.6"/></svg>
<div class="a" style="left:8px;top:93px;width:417px;height:18px;background:linear-gradient(#3f3f4a,#26262d);"></div>
<span class="t" style="top:95.72px;font-size:12.5px;line-height:12.5px;color:#fff;font-weight:bold;left:13.00px;transform-origin:0 0;transform:scaleX(0.9244);">Operations</span>
<svg style="left:391px;top:95px;" width="12" height="14" viewBox="0 0 12 14"><path d="M3.5 1 H8.5 M4.5 1 V7 M7.8 1 V7 M1.5 7.5 H10.5 M6 7.5 V13" stroke="#fff" stroke-width="1.3" fill="none"/></svg>
<svg style="left:407px;top:96px;" width="12" height="12" viewBox="0 0 12 12"><path d="M1 1 L11 11 M11 1 L1 11" stroke="#fff" stroke-width="1.7" fill="none"/></svg>
<div class="a" style="left:8px;top:111px;width:417px;height:52px;background:#f7f7fc;"></div>
<div class="a" style="left:424px;top:111px;width:1px;height:917px;background:#8c8c96;"></div>
<div class="a" style="left:10px;top:137px;width:391px;height:23px;background:#fff;border:1px solid #6e6e78;"></div>
<svg style="left:404px;top:141px;" width="16" height="16" viewBox="0 0 16 16"><path d="M2 2 L14 14 M14 2 L2 14" stroke="#0a0a78" stroke-width="3.2" stroke-linecap="round" fill="none"/></svg>
<div class="a" style="left:8px;top:163px;width:416px;height:865px;background:#fff;"></div>
<div class="a" style="left:8px;top:163px;width:41px;height:25px;background:#fff;border:1px solid #9a9aa4;border-left:none;"></div>
<div class="a" style="left:49px;top:187px;width:375px;height:1px;background:#9a9aa4;"></div>
<div class="a" style="left:48px;top:187px;width:1px;height:840px;background:#9a9aa4;"></div>
<div class="a" style="left:8px;top:1027px;width:417px;height:1px;background:#8c8c96;"></div>
<span class="t" style="top:192.14px;font-size:12px;line-height:12px;color:#e03000;left:38.83px;transform-origin:100% 0;transform:scaleX(0.8242);">1</span>
<span class="t" style="top:192.14px;font-size:12px;line-height:12px;color:#000;left:93.40px;transform-origin:0 0;transform:scaleX(0.9777);">Drafting Stage</span>
<span class="t" style="top:210.14px;font-size:12px;line-height:12px;color:#000;left:22.15px;transform-origin:100% 0;transform:scaleX(0.9634);">0,03</span>
<span class="t" style="top:210.14px;font-size:12px;line-height:12px;color:#000;left:93.40px;transform-origin:0 0;transform:scaleX(0.9815);">Auxiliary view (View 7)</span>
<div class="a" style="left:56.5px;top:212px;width:9px;height:9px;border:1px solid #919191;background:#fff"></div>
<div class="a" style="left:58.5px;top:216px;width:5px;height:1px;background:#1f3f9f;"></div>
<div class="a" style="left:60.5px;top:214px;width:1px;height:5px;background:#1f3f9f;"></div>
<span class="t" style="top:228.14px;font-size:12px;line-height:12px;color:#000;left:22.15px;transform-origin:100% 0;transform:scaleX(0.9634);">0,01</span>
<span class="t" style="top:228.14px;font-size:12px;line-height:12px;color:#000;left:93.40px;transform-origin:0 0;transform:scaleX(0.9815);">Auxiliary view (View 6)</span>
<div class="a" style="left:56.5px;top:230px;width:9px;height:9px;border:1px solid #919191;background:#fff"></div>
<div class="a" style="left:58.5px;top:234px;width:5px;height:1px;background:#1f3f9f;"></div>
<span class="t" style="top:246.14px;font-size:12px;line-height:12px;color:#000;left:112.30px;transform-origin:0 0;transform:scaleX(0.9657);">Entities</span>
<div class="a" style="left:76.0px;top:248px;width:9px;height:9px;border:1px solid #919191;background:#fff"></div>
<div class="a" style="left:78.0px;top:252px;width:5px;height:1px;background:#1f3f9f;"></div>
<div class="a" style="left:80.0px;top:250px;width:1px;height:5px;background:#1f3f9f;"></div>
<span class="t" style="top:264.14px;font-size:12px;line-height:12px;color:#000;left:22.15px;transform-origin:100% 0;transform:scaleX(0.9634);">0,00</span>
<span class="t" style="top:264.14px;font-size:12px;line-height:12px;color:#000;left:112.30px;transform-origin:0 0;transform:scaleX(1.0583);">Hiding</span>
<div class="a" style="left:76.0px;top:266px;width:9px;height:9px;border:1px solid #919191;background:#fff"></div>
<div class="a" style="left:78.0px;top:270px;width:5px;height:1px;background:#1f3f9f;"></div>
<div class="a" style="left:80.0px;top:268px;width:1px;height:5px;background:#1f3f9f;"></div>
<span class="t" style="top:282.14px;font-size:12px;line-height:12px;color:#000;left:22.15px;transform-origin:100% 0;transform:scaleX(0.9634);">0,00</span>
<span class="t" style="top:282.14px;font-size:12px;line-height:12px;color:#000;left:112.30px;transform-origin:0 0;">Solving (Detailing)</span>
<div class="a" style="left:76.0px;top:284px;width:9px;height:9px;border:1px solid #919191;background:#fff"></div>
<div class="a" style="left:78.0px;top:288px;width:5px;height:1px;background:#1f3f9f;"></div>
<div class="a" style="left:80.0px;top:286px;width:1px;height:5px;background:#1f3f9f;"></div>
<span class="t" style="top:300.14px;font-size:12px;line-height:12px;color:#000;left:22.15px;transform-origin:100% 0;transform:scaleX(0.9634);">0,04</span>
<span class="t" style="top:300.14px;font-size:12px;line-height:12px;color:#000;left:112.30px;transform-origin:0 0;transform:scaleX(0.9687);">Cropped View 1</span>
<div class="a" style="left:76.0px;top:302px;width:9px;height:9px;border:1px solid #919191;background:#fff"></div>
<div class="a" style="left:78.0px;top:306px;width:5px;height:1px;background:#1f3f9f;"></div>
<div class="a" style="left:80.0px;top:304px;width:1px;height:5px;background:#1f3f9f;"></div>
<span class="t" style="top:318.14px;font-size:12px;line-height:12px;color:#000;left:22.15px;transform-origin:100% 0;transform:scaleX(0.9634);">0,00</span>
<span class="t" style="top:318.14px;font-size:12px;line-height:12px;color:#000;left:112.30px;transform-origin:0 0;transform:scaleX(0.9268);">Axes 3</span>
<div class="a" style="left:76.0px;top:320px;width:9px;height:9px;border:1px solid #919191;background:#fff"></div>
<div class="a" style="left:78.0px;top:324px;width:5px;height:1px;background:#1f3f9f;"></div>
<div class="a" style="left:80.0px;top:322px;width:1px;height:5px;background:#1f3f9f;"></div>
<span class="t" style="top:336.14px;font-size:12px;line-height:12px;color:#000;left:22.15px;transform-origin:100% 0;transform:scaleX(0.9634);">0,00</span>
<span class="t" style="top:336.14px;font-size:12px;line-height:12px;color:#000;left:112.30px;transform-origin:0 0;transform:scaleX(0.9268);">Axes 2</span>
<div class="a" style="left:76.0px;top:338px;width:9px;height:9px;border:1px solid #919191;background:#fff"></div>
<div class="a" style="left:78.0px;top:342px;width:5px;height:1px;background:#1f3f9f;"></div>
<div class="a" style="left:80.0px;top:340px;width:1px;height:5px;background:#1f3f9f;"></div>
<span class="t" style="top:354.14px;font-size:12px;line-height:12px;color:#000;left:22.15px;transform-origin:100% 0;transform:scaleX(0.9634);">0,00</span>
<span class="t" style="top:354.14px;font-size:12px;line-height:12px;color:#000;left:112.30px;transform-origin:0 0;transform:scaleX(0.8995);">Axes 1</span>
<div class="a" style="left:76.0px;top:356px;width:9px;height:9px;border:1px solid #919191;background:#fff"></div>
<div class="a" style="left:78.0px;top:360px;width:5px;height:1px;background:#1f3f9f;"></div>
<div class="a" style="left:80.0px;top:358px;width:1px;height:5px;background:#1f3f9f;"></div>
<span class="t" style="top:372.14px;font-size:12px;line-height:12px;color:#000;left:22.15px;transform-origin:100% 0;transform:scaleX(0.9634);">0,00</span>
<span class="t" style="top:372.14px;font-size:12px;line-height:12px;color:#000;left:112.30px;transform-origin:0 0;transform:scaleX(1.0266);">View Alignment</span>
<div class="a" style="left:76.0px;top:374px;width:9px;height:9px;border:1px solid #919191;background:#fff"></div>
<div class="a" style="left:78.0px;top:378px;width:5px;height:1px;background:#1f3f9f;"></div>
<div class="a" style="left:80.0px;top:376px;width:1px;height:5px;background:#1f3f9f;"></div>
<span class="t" style="top:390.14px;font-size:12px;line-height:12px;color:#000;left:22.15px;transform-origin:100% 0;transform:scaleX(0.9634);">0,02</span>
<span class="t" style="top:390.14px;font-size:12px;line-height:12px;color:#000;left:112.30px;transform-origin:0 0;transform:scaleX(0.9852);">Projection (View 6)</span>
<div class="a" style="left:76.0px;top:392px;width:9px;height:9px;border:1px solid #919191;background:#fff"></div>
<div class="a" style="left:78.0px;top:396px;width:5px;height:1px;background:#1f3f9f;"></div>
<div class="a" style="left:80.0px;top:394px;width:1px;height:5px;background:#1f3f9f;"></div>
<span class="t" style="top:408.14px;font-size:12px;line-height:12px;color:#000;left:22.15px;transform-origin:100% 0;transform:scaleX(0.9634);">0,00</span>
<span class="t" style="top:408.14px;font-size:12px;line-height:12px;color:#000;left:112.30px;transform-origin:0 0;transform:scaleX(0.8975);">Set (Set)</span>
<div class="a" style="left:76.0px;top:410px;width:9px;height:9px;border:1px solid #919191;background:#fff"></div>
<div class="a" style="left:78.0px;top:414px;width:5px;height:1px;background:#1f3f9f;"></div>
<div class="a" style="left:80.0px;top:412px;width:1px;height:5px;background:#1f3f9f;"></div>
<span class="t" style="top:426.14px;font-size:12px;line-height:12px;color:#000;left:22.15px;transform-origin:100% 0;transform:scaleX(0.9634);">0,00</span>
<span class="t" style="top:426.14px;font-size:12px;line-height:12px;color:#000;left:112.30px;transform-origin:0 0;transform:scaleX(0.7998);">...</span>
<span class="t" style="top:444.14px;font-size:12px;line-height:12px;color:#000;left:22.15px;transform-origin:100% 0;transform:scaleX(0.9634);">0,07</span>
<span class="t" style="top:444.14px;font-size:12px;line-height:12px;color:#000;left:93.40px;transform-origin:0 0;transform:scaleX(0.9653);">Detail view (View 5)</span>
<div class="a" style="left:56.5px;top:446px;width:9px;height:9px;border:1px solid #919191;background:#fff"></div>
<div class="a" style="left:58.5px;top:450px;width:5px;height:1px;background:#1f3f9f;"></div>
<div class="a" style="left:60.5px;top:448px;width:1px;height:5px;background:#1f3f9f;"></div>
<span class="t" style="top:462.14px;font-size:12px;line-height:12px;color:#000;left:22.15px;transform-origin:100% 0;transform:scaleX(0.9634);">0,06</span>
<span class="t" style="top:462.14px;font-size:12px;line-height:12px;color:#000;left:93.40px;transform-origin:0 0;transform:scaleX(0.9653);">Detail view (View 4)</span>
<div class="a" style="left:56.5px;top:464px;width:9px;height:9px;border:1px solid #919191;background:#fff"></div>
<div class="a" style="left:58.5px;top:468px;width:5px;height:1px;background:#1f3f9f;"></div>
<div class="a" style="left:60.5px;top:466px;width:1px;height:5px;background:#1f3f9f;"></div>
<span class="t" style="top:480.14px;font-size:12px;line-height:12px;color:#000;left:22.15px;transform-origin:100% 0;transform:scaleX(0.9634);">0,06</span>
<span class="t" style="top:480.14px;font-size:12px;line-height:12px;color:#000;left:93.40px;transform-origin:0 0;transform:scaleX(0.9653);">Detail view (View 3)</span>
<div class="a" style="left:56.5px;top:482px;width:9px;height:9px;border:1px solid #919191;background:#fff"></div>
<div class="a" style="left:58.5px;top:486px;width:5px;height:1px;background:#1f3f9f;"></div>
<div class="a" style="left:60.5px;top:484px;width:1px;height:5px;background:#1f3f9f;"></div>
<span class="t" style="top:498.14px;font-size:12px;line-height:12px;color:#000;left:22.15px;transform-origin:100% 0;transform:scaleX(0.9634);">0,07</span>
<span class="t" style="top:498.14px;font-size:12px;line-height:12px;color:#000;left:93.40px;transform-origin:0 0;transform:scaleX(0.9653);">Detail view (View 2)</span>
<div class="a" style="left:56.5px;top:500px;width:9px;height:9px;border:1px solid #919191;background:#fff"></div>
<div class="a" style="left:58.5px;top:504px;width:5px;height:1px;background:#1f3f9f;"></div>
<div class="a" style="left:60.5px;top:502px;width:1px;height:5px;background:#1f3f9f;"></div>
<span class="t" style="top:516.14px;font-size:12px;line-height:12px;color:#000;left:22.15px;transform-origin:100% 0;transform:scaleX(0.9634);">0,31</span>
<span class="t" style="top:516.14px;font-size:12px;line-height:12px;color:#000;left:93.40px;transform-origin:0 0;transform:scaleX(0.9754);">Main view (View 1)</span>
<div class="a" style="left:56.5px;top:518px;width:9px;height:9px;border:1px solid #919191;background:#fff"></div>
<div class="a" style="left:58.5px;top:522px;width:5px;height:1px;background:#1f3f9f;"></div>
<div class="a" style="left:60.5px;top:520px;width:1px;height:5px;background:#1f3f9f;"></div>
<span class="t" style="top:534.14px;font-size:12px;line-height:12px;color:#000;left:22.15px;transform-origin:100% 0;transform:scaleX(0.9634);">0,01</span>
<span class="t" style="top:534.14px;font-size:12px;line-height:12px;color:#000;left:93.40px;transform-origin:0 0;transform:scaleX(0.9720);">Solving (View Layout Sketch)</span>
<div class="a" style="left:56.5px;top:536px;width:9px;height:9px;border:1px solid #919191;background:#fff"></div>
<div class="a" style="left:58.5px;top:540px;width:5px;height:1px;background:#1f3f9f;"></div>
<div class="a" style="left:60.5px;top:538px;width:1px;height:5px;background:#1f3f9f;"></div>
<span class="t" style="top:552.14px;font-size:12px;line-height:12px;color:#000;left:22.15px;transform-origin:100% 0;transform:scaleX(0.9634);">0,00</span>
<span class="t" style="top:552.14px;font-size:12px;line-height:12px;color:#000;left:93.40px;transform-origin:0 0;transform:scaleX(0.7998);">...</span>
<svg style="left:0px;top:0px;pointer-events:none;" width="1920" height="1080" viewBox="0 0 1920 1080"><g stroke="#8a8a8a" stroke-width="1" stroke-dasharray="1 1" fill="none"><path d="M61 198.5 H72" /><path d="M66 216.5 H72" /><path d="M66 234.5 H72" /><path d="M85.5 252.5 H91.5" /><path d="M85.5 270.5 H91.5" /><path d="M85.5 288.5 H91.5" /><path d="M85.5 306.5 H91.5" /><path d="M85.5 324.5 H91.5" /><path d="M85.5 342.5 H91.5" /><path d="M85.5 360.5 H91.5" /><path d="M85.5 378.5 H91.5" /><path d="M85.5 396.5 H91.5" /><path d="M85.5 414.5 H91.5" /><path d="M80.5 432.5 H91.5" /><path d="M66 450.5 H72" /><path d="M66 468.5 H72" /><path d="M66 486.5 H72" /><path d="M66 504.5 H72" /><path d="M66 522.5 H72" /><path d="M66 540.5 H72" /><path d="M61 558.5 H72" /><path d="M61.5 198 V558"/><path d="M80.5 240 V432"/></g></svg>
<div class="a" style="left:9px;top:1028px;width:54px;height:19px;background:linear-gradient(#fdfdff,#e9e9f0);border:1px solid #a8a8b4;border-top:none;border-radius:0 0 3px 3px;"></div>
<div class="a" style="left:64px;top:1028px;width:67px;height:19px;background:linear-gradient(#fdfdff,#e9e9f0);border:1px solid #a8a8b4;border-top:none;border-radius:0 0 3px 3px;"></div>
<div class="a" style="left:132px;top:1028px;width:93px;height:19px;background:linear-gradient(#fbbf82,#fdd9ae);border:1px solid #e89a4c;border-top:none;border-radius:0 0 3px 3px;"></div>
<span class="t" style="top:1031.14px;font-size:12px;line-height:12px;color:#000;left:31.30px;transform-origin:0 0;transform:scaleX(0.9068);">Parts</span>
<span class="t" style="top:1031.14px;font-size:12px;line-height:12px;color:#000;left:86.00px;transform-origin:0 0;transform:scaleX(0.9657);">Entities</span>
<span class="t" style="top:1030.72px;font-size:12.5px;line-height:12.5px;color:#000;font-weight:bold;left:154.00px;transform-origin:0 0;transform:scaleX(0.9320);">Operations</span>
<div class="a" style="left:449px;top:1046px;width:1463px;height:1px;background:#4a4a52;"></div>
<span class="t" style="top:1054.64px;font-size:12px;line-height:12px;color:#000;left:12.30px;transform-origin:0 0;transform:scaleX(0.9928);">Select dimension location.</span>
<span class="t" style="top:1054.64px;font-size:12px;line-height:12px;color:#000;left:992.30px;transform-origin:0 0;transform:scaleX(0.9328);">X=+101,923</span>
<span class="t" style="top:1054.64px;font-size:12px;line-height:12px;color:#000;left:1067.30px;transform-origin:0 0;transform:scaleX(0.9328);">Y=+059,881</span>
<span class="t" style="top:1054.64px;font-size:12px;line-height:12px;color:#000;left:1142.30px;transform-origin:0 0;transform:scaleX(0.9533);">Z=+000,000</span>
<span class="t" style="top:1054.64px;font-size:12px;line-height:12px;color:#000;left:1279.00px;transform-origin:0 0;transform:scaleX(0.9699);">Visualization: 0,2mm 15°</span>
<div class="a" style="left:424px;top:1028px;width:26px;height:18px;background:#e6e6ea;"></div>
<div class="a" style="left:428px;top:93px;width:20px;height:131px;background:linear-gradient(90deg,#f2f2f6,#d2d2da);border:1px solid #b4b4be;border-radius:3px;"></div>
<span class="t" style="left:443.3px;top:116px;font-size:12px;line-height:12px;transform-origin:0 0;transform:rotate(90deg) scaleX(0.985);color:#111">716 - Turning Parts</span>
<div class="a" style="left:449.5px;top:93.5px;width:64px;height:19px;background:linear-gradient(#ffffff,#e4e4ee);border:1px solid #b0b0bc;border-bottom:none;border-radius:3px 3px 0 0;"></div>
<div class="a" style="left:513px;top:93.5px;width:71.5px;height:19px;background:linear-gradient(#fbb56e,#fdd2a0);border:1px solid #e89a4c;border-bottom:none;border-radius:3px 3px 0 0;"></div>
<span class="t" style="top:96.84px;font-size:12px;line-height:12px;color:#000;left:452.50px;transform-origin:0 0;transform:scaleX(0.9347);">Start Page</span>
<span class="t" style="top:96.42px;font-size:12.5px;line-height:12.5px;color:#000;font-weight:bold;left:536.50px;transform-origin:0 0;transform:scaleX(0.9594);">Axle 1*</span>
<svg style="left:1875px;top:96.5px;" width="13" height="12" viewBox="0 0 13 12"><path d="M0 1 H13" stroke="#222" stroke-width="1.6"/><path d="M0 4 H13 L6.5 11 Z" fill="#222"/></svg>
<svg style="left:1894.5px;top:96.5px;" width="11" height="11" viewBox="0 0 11 11"><path d="M1 1 L10 10 M10 1 L1 10" stroke="#222" stroke-width="2" fill="none"/></svg>
<div class="a" style="left:449px;top:112px;width:1463px;height:913px;background:linear-gradient(#4b6598,#e8e6e6);border-left:1px solid #3a3a44;border-top:1px solid #3a4a70;"></div>
<div class="a" style="left:449px;top:530.5px;width:5.6px;height:79.5px;border:1px solid #8a8a98;border-left:none;background:#eeeef4;"></div>
<div class="a" style="left:449.3px;top:533px;width:0.9px;height:74.5px;background:#55555f;"></div>
<div class="a" style="left:451px;top:533px;width:0.9px;height:74.5px;background:#55555f;"></div>
<div class="a" style="left:605px;top:162px;width:1159px;height:821px;background:linear-gradient(rgba(0,0,0,0.44),rgba(0,0,0,0.51));"></div>
<div class="a" style="left:597px;top:154px;width:1159px;height:820px;background:#fff;"></div>
<style>
.dr text{font-family:"Liberation Sans",sans-serif}
.dr path,.dr circle,.dr rect,.dr ellipse{vector-effect:none}
.k07{fill:none;stroke:#222;stroke-width:.75}
.k1{fill:none;stroke:#111;stroke-width:1}
.k2{fill:none;stroke:#050505;stroke-width:1.9;stroke-linejoin:round}
.k25{fill:none;stroke:#050505;stroke-width:2.4}
.b1{fill:none;stroke:#0000ff;stroke-width:1}
.b15{fill:none;stroke:#0000ff;stroke-width:1.5}
.b2{fill:none;stroke:#0000ff;stroke-width:1.8}
.o1{fill:none;stroke:#ff8000;stroke-width:1}
.t07{fill:none;stroke:#111;stroke-width:.7}
.t1{fill:none;stroke:#111;stroke-width:1}
.t15{fill:none;stroke:#0a0a0a;stroke-width:1.9}
</style><svg class="dr" style="left:0;top:0" width="1920" height="1080" viewBox="0 0 1920 1080"><path class="k2" d="M913 362.0Q913 357.8 917.5 357.8H997.5L1011.5 365.8Q1016 367.2 1021 367.0Q1026.5 366.7 1028.5 363.5" />
<path class="k2" d="M1028.8 363.5V345.5Q1029 341.0 1034 341.0H1078.3Q1084 342.5 1088 342.9Q1094 342.9 1095 337.5V329.0Q1095.5 324.8 1100 324.8H1134V329.0H1145V324.8H1190Q1196 325.9 1201 326.7H1210.8V304.0H1327.2V324.8H1360V342.3Q1368 342.2 1377 340.9H1470Q1476 340.9 1476 346.5V366.2H1543Q1549 366.2 1553 367.5Q1567 368.9 1582 367.5Q1587 366.2 1593 366.2H1620Q1625.3 366.2 1625.3 371.5V407.5" />
<path class="k1" d="M918.7 364.5L997.5 364.5"/>
<path class="k1" d="M997.5 364.5L1008.3 366.0"/>
<path class="k2" d="M913 453.0Q913 457.2 917.5 457.2H997.5L1011.5 449.2Q1016 447.8 1021 448.0Q1026.5 448.3 1028.5 451.5" />
<path class="k2" d="M1028.8 451.5V469.5Q1029 474.0 1034 474.0H1078.3Q1084 472.5 1088 472.1Q1094 472.1 1095 477.5V486.0Q1095.5 490.2 1100 490.2H1134V486.0H1145V490.2H1190Q1196 489.1 1201 488.3H1210.8V511.0H1327.2V490.2H1360V472.7Q1368 472.8 1377 474.1H1470Q1476 474.1 1476 468.5V448.8H1620Q1625.3 448.8 1625.3 443.5V407.5" />
<path class="k1" d="M918.7 450.5L997.5 450.5"/>
<path class="k1" d="M997.5 450.5L1008.3 449.0"/>
<path class="k25" d="M913.0 362.0L913.0 453.0"/>
<path class="k1" d="M918.7 358.5L918.7 456.5"/>
<path class="k2" d="M997.5 357.8L997.5 457.2"/>
<path class="k1" d="M1008.3 366.0L1008.3 449.0"/>
<path class="k2" d="M1033.5 341.0L1033.5 474.0"/>
<path class="k2" d="M1078.8 341.0L1078.8 474.0"/>
<path class="k2" d="M1099.5 324.8L1099.5 490.2"/>
<path class="k2" d="M1134.0 324.8L1134.0 490.2"/>
<path class="k2" d="M1145.0 324.8L1145.0 490.2"/>
<path class="k2" d="M1190.0 324.8L1190.0 490.2"/>
<path class="k25" d="M1210.8 304.0L1210.8 511.0"/>
<path class="k2" d="M1327.2 304.0L1327.2 511.0"/>
<path class="k2" d="M1360.0 324.8L1360.0 490.2"/>
<path class="k2" d="M1377.0 341.0L1377.0 474.0"/>
<path class="k2" d="M1472.3 341.5L1472.3 473.5"/>
<path class="k1" d="M1621.5 366.5L1621.5 448.5"/>
<path class="k1" d="M1476.0 366.2L1476.0 448.8"/>
<defs><pattern id="h1" width="3.9" height="3.9" patternUnits="userSpaceOnUse" patternTransform="rotate(-45)"><line x1="0" y1="0.5" x2="3.9" y2="0.5" stroke="#1a1a1a" stroke-width="1"/></pattern><clipPath id="c1"><path d="M913 374.2A33.8 33.8 0 0 1 913 440.8Z"/></clipPath></defs>
<path d="M913 374.2A33.7 33.7 0 1 1 913 440.8Z" fill="url(#h1)"/>
<path d="M913 374.2A33.7 33.7 0 1 1 913 440.8" fill="none" stroke="#3a6fb0" stroke-width="0.9"/>
<path d="M914 395.8H933.3L940 407.5L933.3 419.5H914Z" fill="#fff"/>
<path class="k2" d="M914 395.8H933.3L940 407.5L933.3 419.5H914" />
<path class="k1" d="M933.3 395.8L933.3 419.5"/>
<path class="k1" d="M918.7 395.8L918.7 419.5"/>
<path d="M909 407.5H1629" stroke="#c81e1e" stroke-width="0.9" stroke-dasharray="14 3 2 3" fill="none"/>
<path class="k1" d="M1543.3 373.5V380.5H1549M1560 380.5H1572M1577 380.5H1585" />
<path class="k1" d="M1592.5 366.0L1592.5 374.0"/>
<path d="M1555.4 363V386M1579.6 363V386" stroke="#d03030" stroke-width="0.9" stroke-dasharray="6 2 1.5 2" fill="none"/>
<circle class="k07" cx="1017.5" cy="354.2" r="25.2"/>
<circle class="k07" cx="1090.5" cy="336.7" r="21"/>
<circle class="k07" cx="1139.5" cy="324.5" r="16.7"/>
<text x="1017.5" y="321.8" font-size="20.5" fill="#111" text-anchor="middle" textLength="12.0" lengthAdjust="spacingAndGlyphs">A</text>
<text x="1090.0" y="307.7" font-size="20.5" fill="#111" text-anchor="middle" textLength="10.0" lengthAdjust="spacingAndGlyphs">B</text>
<text x="1139.0" y="299.3" font-size="20.5" fill="#111" text-anchor="middle" textLength="10.0" lengthAdjust="spacingAndGlyphs">C</text>
<path class="b1" d="M877.0 357.8L913.0 357.8"/>
<path class="b1" d="M877.0 457.2L913.0 457.2"/>
<path class="b1" d="M879.7 357.8L879.7 457.2"/>
<path d="M879.7 357.8L881.6 365.3L877.8 365.3Z" fill="#0000ff"/>
<path d="M879.7 457.2L877.8 449.7L881.6 449.7Z" fill="#0000ff"/>
<text x="876.5" y="407.5" font-size="9.5" fill="#2a2aff" text-anchor="middle" textLength="36.0" lengthAdjust="spacingAndGlyphs" transform="rotate(-90 876.5 407.5)">M12 × 1.5</text>
<path class="b1" d="M912.3 457.5L912.3 648.0"/>
<path class="b1" d="M1028.3 474.0L1028.3 570.0"/>
<path class="b1" d="M1095.8 491.0L1095.8 570.0"/>
<path class="b1" d="M1211.3 514.0L1211.3 618.0"/>
<path class="b1" d="M1360.5 493.0L1360.5 573.0"/>
<path class="b1" d="M1326.7 514.0L1326.7 538.0"/>
<path class="b1" d="M1476.7 474.0L1476.7 558.0"/>
<path class="b1" d="M1625.5 449.0L1625.5 648.0"/>
<path class="b1" d="M912.3 566.3L1388.0 566.3"/>
<path d="M1028.3 566.3L1020.8 568.2L1020.8 564.4Z" fill="#0000ff"/>
<path d="M1028.3 566.3L1035.8 564.4L1035.8 568.2Z" fill="#0000ff"/>
<path d="M1095.8 566.3L1088.3 568.2L1088.3 564.4Z" fill="#0000ff"/>
<path d="M1095.8 566.3L1103.3 564.4L1103.3 568.2Z" fill="#0000ff"/>
<path d="M1211.3 566.3L1203.8 568.2L1203.8 564.4Z" fill="#0000ff"/>
<path d="M1211.3 566.3L1218.8 564.4L1218.8 568.2Z" fill="#0000ff"/>
<path d="M1360.5 566.3L1353.0 568.2L1353.0 564.4Z" fill="#0000ff"/>
<path d="M1360.5 566.3L1368.0 564.4L1368.0 568.2Z" fill="#0000ff"/>
<path d="M912.3 566.3L919.8 564.4L919.8 568.2Z" fill="#0000ff"/>
<text x="970.8" y="564.3" font-size="9.5" fill="#2a2aff" text-anchor="middle" textLength="9.0" lengthAdjust="spacingAndGlyphs">14</text>
<text x="1061.7" y="564.3" font-size="9.5" fill="#2a2aff" text-anchor="middle" textLength="4.5" lengthAdjust="spacingAndGlyphs">8</text>
<text x="1153.0" y="564.3" font-size="9.5" fill="#2a2aff" text-anchor="middle" textLength="9.0" lengthAdjust="spacingAndGlyphs">14</text>
<rect class="b2" x="1278.7" y="550.8" width="13.8" height="12.5" rx="1"/>
<text x="1285.6" y="560.3" font-size="9" fill="#2a2aff" text-anchor="middle" textLength="8.5" lengthAdjust="spacingAndGlyphs">18</text>
<path class="b1" d="M1326.7 535.0L1360.5 535.0"/>
<path d="M1326.7 535.0L1334.2 533.1L1334.2 536.9Z" fill="#0000ff"/>
<path d="M1360.5 535.0L1353.0 536.9L1353.0 533.1Z" fill="#0000ff"/>
<text x="1343.6" y="531.5" font-size="9.5" fill="#2a2aff" text-anchor="middle" textLength="4.5" lengthAdjust="spacingAndGlyphs">4</text>
<path class="b1" d="M1476.7 556.0L1625.5 556.0"/>
<path d="M1476.7 556.0L1484.2 554.1L1484.2 557.9Z" fill="#0000ff"/>
<path d="M1625.5 556.0L1618.0 557.9L1618.0 554.1Z" fill="#0000ff"/>
<text x="1550.0" y="552.5" font-size="9.5" fill="#2a2aff" text-anchor="middle" textLength="9.0" lengthAdjust="spacingAndGlyphs">18</text>
<path class="b1" d="M912.3 645.5L1625.5 645.5"/>
<path d="M912.3 645.5L919.8 643.6L919.8 647.4Z" fill="#0000ff"/>
<path d="M1625.5 645.5L1618.0 647.4L1618.0 643.6Z" fill="#0000ff"/>
<text x="1268.0" y="642.0" font-size="9.5" fill="#2a2aff" text-anchor="middle" textLength="9.0" lengthAdjust="spacingAndGlyphs">86</text>
<rect class="b2" x="948.3" y="488.3" width="53.4" height="15.5" rx="1.2"/>
<path class="b15" d="M962.5 488.3L962.5 503.8"/>
<path class="b15" d="M983.0 488.3L983.0 503.8"/>
<path class="b1" d="M955.4 491.1V500.8M951.4 500.8H959.4" />
<text x="972.8" y="499.2" font-size="8.5" fill="#2a2aff" text-anchor="middle" textLength="14.1" lengthAdjust="spacingAndGlyphs">0,05</text>
<text x="992.3" y="499.2" font-size="8.5" fill="#2a2aff" text-anchor="middle" textLength="12.0" lengthAdjust="spacingAndGlyphs">A-B</text>
<path class="b1" d="M1001.7 496.2L1028.3 496.2"/>
<path d="M1028.3 496.2L1020.8 498.1L1020.8 494.3Z" fill="#0000ff"/>
<path class="b1" d="M1168.7 490.5L1168.7 518.0"/>
<path d="M1168.7 496.3L1165.1 490.5L1172.3 490.5Z" fill="#0000ff"/>
<rect class="b2" x="1161.7" y="517.8" width="14.6" height="14.7" rx="1"/>
<text x="1169.0" y="528.4" font-size="9" fill="#2a2aff" text-anchor="middle" textLength="5.1" lengthAdjust="spacingAndGlyphs">B</text>
<rect class="b2" x="1130.5" y="599.7" width="53.2" height="14.0" rx="1.2"/>
<path class="b15" d="M1145.0 599.7L1145.0 613.7"/>
<path class="b15" d="M1165.0 599.7L1165.0 613.7"/>
<path class="b1" d="M1137.8 602.5V610.7M1133.8 610.7H1141.8" />
<text x="1155.0" y="609.9" font-size="8.5" fill="#2a2aff" text-anchor="middle" textLength="14.1" lengthAdjust="spacingAndGlyphs">0,02</text>
<text x="1174.3" y="609.9" font-size="8.5" fill="#2a2aff" text-anchor="middle" textLength="12.0" lengthAdjust="spacingAndGlyphs">A-B</text>
<rect class="b2" x="1130.5" y="613.7" width="53.2" height="13.8" rx="1.2"/>
<path class="b15" d="M1145.0 613.7L1145.0 627.5"/>
<path class="b15" d="M1165.0 613.7L1165.0 627.5"/>
<circle class="b1" cx="1137.8" cy="620.6" r="3.2"/>
<path class="b1" d="M1132.8 620.6h10M1137.8 615.6v10" />
<text x="1155.0" y="623.8" font-size="8.5" fill="#2a2aff" text-anchor="middle" textLength="10.0" lengthAdjust="spacingAndGlyphs">0,1</text>
<text x="1174.3" y="623.8" font-size="8.5" fill="#2a2aff" text-anchor="middle" textLength="5.2" lengthAdjust="spacingAndGlyphs">C</text>
<path class="b1" d="M1183.7 613.7L1211.3 613.7"/>
<path d="M1211.3 613.7L1203.8 615.6L1203.8 611.8Z" fill="#0000ff"/>
<path class="b15" d="M1145.8 590.0L1150.8 599.2L1162.5 580.0H1190.0" />
<text x="1165.8" y="589.0" font-size="8.5" fill="#2a2aff" text-anchor="start" textLength="21.3" lengthAdjust="spacingAndGlyphs">Ra 1.6</text>
<path class="b1" d="M1065.8 341.0L1065.8 474.0"/>
<path d="M1065.8 341.0L1067.7 348.5L1063.9 348.5Z" fill="#0000ff"/>
<path d="M1065.8 474.0L1063.9 466.5L1067.7 466.5Z" fill="#0000ff"/>
<text x="1063.0" y="452.0" font-size="9.5" fill="#2a2aff" text-anchor="middle" textLength="15.0" lengthAdjust="spacingAndGlyphs" transform="rotate(-90 1063.0 452.0)"><tspan font-weight="bold" stroke="#2a2aff" stroke-width="0.5">ø</tspan>16</text>
<circle class="b15" cx="1059.5" cy="431.5" r="4.2"/>
<text x="1062.0" y="431.5" font-size="7" fill="#2a2aff" text-anchor="middle" textLength="4.0" lengthAdjust="spacingAndGlyphs" font-weight="bold" transform="rotate(-90 1062.0 431.5)">E</text>
<path class="b15" d="M1058 413L1065.8 403.5L1052 392H1044.5V365.5" />
<path class="b15" d="M1058 413L1065.8 403.5L1052 392" />
<text x="1054.0" y="375.0" font-size="8.5" fill="#2a2aff" text-anchor="middle" textLength="21.0" lengthAdjust="spacingAndGlyphs" transform="rotate(-90 1054.0 375.0)">Ra 1.6</text>
<path class="b1" d="M1168.7 318.0L1168.7 497.0"/>
<path d="M1168.7 325.0L1166.8 317.5L1170.6 317.5Z" fill="#0000ff"/>
<path d="M1168.7 325.0L1170.6 332.5L1166.8 332.5Z" fill="#0000ff"/>
<path d="M1168.7 490.0L1166.8 482.5L1170.6 482.5Z" fill="#0000ff"/>
<path d="M1168.7 490.0L1170.6 497.5L1166.8 497.5Z" fill="#0000ff"/>
<text x="1166.0" y="407.0" font-size="9.5" fill="#2a2aff" text-anchor="middle" textLength="26.0" lengthAdjust="spacingAndGlyphs" transform="rotate(-90 1166.0 407.0)"><tspan font-weight="bold" stroke="#2a2aff" stroke-width="0.5">ø</tspan>20g6</text>
<rect class="b2" x="1253.3" y="266.5" width="53.4" height="14.8" rx="1.2"/>
<path class="b15" d="M1268.0 266.5L1268.0 281.3"/>
<path class="b15" d="M1288.3 266.5L1288.3 281.3"/>
<circle class="b1" cx="1260.7" cy="273.9" r="4.6"/><circle class="b1" cx="1260.7" cy="273.9" r="2.6"/>
<text x="1278.2" y="277.1" font-size="8.5" fill="#2a2aff" text-anchor="middle" textLength="14.1" lengthAdjust="spacingAndGlyphs">0,05</text>
<text x="1297.5" y="277.1" font-size="8.5" fill="#2a2aff" text-anchor="middle" textLength="12.0" lengthAdjust="spacingAndGlyphs">A-B</text>
<path class="b1" d="M1253.3 274.5H1168.7V318" />
<path class="b1" d="M1306.7 274.5H1400.5V334" />
<path class="b15" d="M1273.3 258.3L1278.3 265.8L1289.2 248.6H1318.0" />
<text x="1291.7" y="257.2" font-size="8.5" fill="#2a2aff" text-anchor="start" textLength="23.0" lengthAdjust="spacingAndGlyphs">Ra 0.8</text>
<path class="b1" d="M1265.3 304.0L1265.3 511.0"/>
<path d="M1265.3 304.0L1267.2 311.5L1263.4 311.5Z" fill="#0000ff"/>
<path d="M1265.3 511.0L1263.4 503.5L1267.2 503.5Z" fill="#0000ff"/>
<text x="1262.5" y="407.5" font-size="9.5" fill="#2a2aff" text-anchor="middle" textLength="17.0" lengthAdjust="spacingAndGlyphs" transform="rotate(-90 1262.5 407.5)"><tspan font-weight="bold" stroke="#2a2aff" stroke-width="0.5">ø</tspan>25</text>
<path class="b1" d="M1344.5 325.0L1344.5 490.0"/>
<path d="M1344.5 325.0L1346.4 332.5L1342.6 332.5Z" fill="#0000ff"/>
<path d="M1344.5 490.0L1342.6 482.5L1346.4 482.5Z" fill="#0000ff"/>
<text x="1341.5" y="407.5" font-size="9.5" fill="#2a2aff" text-anchor="middle" textLength="17.0" lengthAdjust="spacingAndGlyphs" transform="rotate(-90 1341.5 407.5)"><tspan font-weight="bold" stroke="#2a2aff" stroke-width="0.5">ø</tspan>20</text>
<path class="b1" d="M1400.5 334.0L1400.5 474.0"/>
<path d="M1400.5 340.8L1398.6 333.3L1402.4 333.3Z" fill="#0000ff"/>
<path d="M1400.5 340.8L1402.4 348.3L1398.6 348.3Z" fill="#0000ff"/>
<path d="M1400.5 474.0L1398.6 466.5L1402.4 466.5Z" fill="#0000ff"/>
<text x="1397.5" y="415.0" font-size="9.5" fill="#2a2aff" text-anchor="middle" textLength="26.0" lengthAdjust="spacingAndGlyphs" transform="rotate(-90 1397.5 415.0)"><tspan font-weight="bold" stroke="#2a2aff" stroke-width="0.5">ø</tspan>16js6</text>
<circle class="b15" cx="1394" cy="392.5" r="4.2"/>
<text x="1396.5" y="392.5" font-size="7" fill="#2a2aff" text-anchor="middle" textLength="4.0" lengthAdjust="spacingAndGlyphs" font-weight="bold" transform="rotate(-90 1396.5 392.5)">E</text>
<path class="b15" d="M1344.5 295V304.6H1351" />
<text x="1350.5" y="304.3" font-size="9" fill="#2a2aff" text-anchor="start" textLength="12.0" lengthAdjust="spacingAndGlyphs">-0,2</text>
<path class="b1" d="M1362 307.5H1343.5L1328.5 323" />
<path d="M1328.3 323.3L1331.6 317.4L1334.0 319.8Z" fill="#0000ff"/>
<path d="M1441.4 480.0L1437.8 474.2L1445.0 474.2Z" fill="#0000ff"/>
<path class="b1" d="M1441.4 478.0L1441.4 488.0"/>
<rect class="b2" x="1434.2" y="487.5" width="14.5" height="14.2" rx="1"/>
<text x="1441.5" y="497.9" font-size="9" fill="#2a2aff" text-anchor="middle" textLength="5.1" lengthAdjust="spacingAndGlyphs">A</text>
<rect class="b2" x="1389.7" y="517.8" width="14.8" height="14.0" rx="1"/>
<text x="1397.1" y="528.1" font-size="9" fill="#2a2aff" text-anchor="middle" textLength="5.5" lengthAdjust="spacingAndGlyphs">C</text>
<path class="b1" d="M1397.0 532.0L1397.0 556.0"/>
<path d="M1397.0 552.5L1400.6 558.3L1393.4 558.3Z" fill="#0000ff"/>
<rect class="b2" x="1387.5" y="558.3" width="53.0" height="15.0" rx="1.2"/>
<path class="b15" d="M1401.7 558.3L1401.7 573.3"/>
<path class="b15" d="M1421.7 558.3L1421.7 573.3"/>
<path class="b1" d="M1394.6 561.1V570.3M1390.6 570.3H1398.6" />
<text x="1411.7" y="569.0" font-size="8.5" fill="#2a2aff" text-anchor="middle" textLength="14.1" lengthAdjust="spacingAndGlyphs">0,02</text>
<text x="1431.1" y="569.0" font-size="8.5" fill="#2a2aff" text-anchor="middle" textLength="12.0" lengthAdjust="spacingAndGlyphs">A-B</text>
<path class="b1" d="M1360.5 566.3L1387.5 566.3"/>
<path class="b15" d="M1417.5 550.0L1422.5 558.3L1434.0 538.7H1461.7" />
<text x="1436.7" y="548.0" font-size="8.5" fill="#2a2aff" text-anchor="start" textLength="21.3" lengthAdjust="spacingAndGlyphs">Ra 1.6</text>
<path class="b1" d="M1543.3 338.0L1543.3 363.0"/>
<path class="b1" d="M1592.5 338.0L1592.5 365.0"/>
<path class="b1" d="M1625.5 338.0L1625.5 366.0"/>
<path class="b1" d="M1543.3 338.7L1625.5 338.7"/>
<path d="M1543.3 338.7L1550.8 336.8L1550.8 340.6Z" fill="#0000ff"/>
<path d="M1592.5 338.7L1585.0 340.6L1585.0 336.8Z" fill="#0000ff"/>
<path d="M1592.5 338.7L1600.0 336.8L1600.0 340.6Z" fill="#0000ff"/>
<path d="M1625.5 338.7L1618.0 340.6L1618.0 336.8Z" fill="#0000ff"/>
<text x="1557.5" y="335.6" font-size="9.5" fill="#2a2aff" text-anchor="start" textLength="11.5" lengthAdjust="spacingAndGlyphs">5,9</text>
<text x="1570.0" y="332.0" font-size="3.6" fill="#2a2aff" text-anchor="start" textLength="6.5" lengthAdjust="spacingAndGlyphs">+0,2</text>
<text x="1570.0" y="335.6" font-size="3.6" fill="#2a2aff" text-anchor="start" textLength="1.7" lengthAdjust="spacingAndGlyphs">0</text>
<text x="1608.0" y="335.6" font-size="9.5" fill="#2a2aff" text-anchor="middle" textLength="4.5" lengthAdjust="spacingAndGlyphs">4</text>
<rect class="b2" x="1638.3" y="324.6" width="15.3" height="14.2" rx="1"/>
<text x="1646.0" y="335.0" font-size="9" fill="#2a2aff" text-anchor="middle" textLength="5.1" lengthAdjust="spacingAndGlyphs">E</text>
<path class="b1" d="M1645.8 339.0L1645.8 362.0"/>
<path d="M1645.8 360.5L1649.4 366.3L1642.2 366.3Z" fill="#0000ff"/>
<path class="b1" d="M1625.5 366.3L1668.0 366.3"/>
<path class="b1" d="M1625.5 448.6L1668.0 448.6"/>
<path class="b1" d="M1665.8 366.3L1665.8 448.6"/>
<path d="M1665.8 366.3L1667.7 373.8L1663.9 373.8Z" fill="#0000ff"/>
<path d="M1665.8 448.6L1663.9 441.1L1667.7 441.1Z" fill="#0000ff"/>
<text x="1663.0" y="414.0" font-size="9.5" fill="#2a2aff" text-anchor="middle" textLength="26.0" lengthAdjust="spacingAndGlyphs" transform="rotate(-90 1663.0 414.0)"><tspan font-weight="bold" stroke="#2a2aff" stroke-width="0.5">ø</tspan>10js6</text>
<circle class="b15" cx="1659.5" cy="391" r="4.2"/>
<text x="1662.0" y="391.0" font-size="7" fill="#2a2aff" text-anchor="middle" textLength="4.0" lengthAdjust="spacingAndGlyphs" font-weight="bold" transform="rotate(-90 1662.0 391.0)">E</text>
<path class="b15" d="M1507 468.8H1534L1545 449.3L1551.3 457.5" />
<text x="1509.7" y="466.3" font-size="8.5" fill="#2a2aff" text-anchor="start" textLength="22.0" lengthAdjust="spacingAndGlyphs">Ra 0.8</text>
<rect class="k2" x="1542.5" y="255.6" width="50.3" height="25.9" rx="12.9"/>
<path d="M1540 268.4H1597M1555.6 250.6V284M1579.6 250.6V284" stroke="#d03030" stroke-width="0.9" stroke-dasharray="7 2 1.5 2" fill="none"/>
<rect class="b2" x="1477.5" y="224.5" width="49.1" height="14.2" rx="1.2"/>
<path class="b15" d="M1491.9 224.5L1491.9 238.7"/>
<path class="b15" d="M1511.9 224.5L1511.9 238.7"/>
<path class="b1" d="M1480.7 228.3h8M1479.7 231.6h10M1480.7 234.9h8" />
<text x="1501.9" y="234.8" font-size="8.5" fill="#2a2aff" text-anchor="middle" textLength="14.1" lengthAdjust="spacingAndGlyphs">0,05</text>
<text x="1519.2" y="234.8" font-size="8.5" fill="#2a2aff" text-anchor="middle" textLength="4.8" lengthAdjust="spacingAndGlyphs">E</text>
<path class="b1" d="M1526.6 231.5H1539.6V256" />
<path d="M1539.6 256.0L1537.4 249.5L1541.8 249.5Z" fill="#0000ff"/>
<path class="b1" d="M1524.0 256.2L1550.0 256.2"/>
<path class="b1" d="M1524.0 281.0L1550.0 281.0"/>
<path class="b1" d="M1527.5 247.5L1527.5 316.5"/>
<path d="M1527.5 256.2L1525.3 249.7L1529.7 249.7Z" fill="#0000ff"/>
<path d="M1527.5 281.0L1529.7 287.5L1525.3 287.5Z" fill="#0000ff"/>
<text x="1524.5" y="316.0" font-size="9.5" fill="#2a2aff" text-anchor="start" textLength="15.0" lengthAdjust="spacingAndGlyphs" transform="rotate(-90 1524.5 316.0)">3H9</text>
<circle class="b15" cx="1521" cy="292.5" r="4.2"/>
<text x="1523.5" y="292.5" font-size="7" fill="#2a2aff" text-anchor="middle" textLength="4.0" lengthAdjust="spacingAndGlyphs" font-weight="bold" transform="rotate(-90 1523.5 292.5)">E</text>
<path class="b15" d="M1559.4 247.0L1564.4 255.6L1575.6 236.0H1603.0" />
<text x="1578.8" y="245.0" font-size="8.5" fill="#2a2aff" text-anchor="start" textLength="22.5" lengthAdjust="spacingAndGlyphs">Ra 0.8</text>
<path class="b1" d="M1555.6 289.0L1555.6 305.0"/>
<path class="b1" d="M1579.6 289.0L1579.6 305.0"/>
<path class="b1" d="M1555.6 303.0L1579.6 303.0"/>
<path d="M1555.6 303.0L1563.1 301.1L1563.1 304.9Z" fill="#0000ff"/>
<path d="M1579.6 303.0L1572.1 304.9L1572.1 301.1Z" fill="#0000ff"/>
<text x="1567.6" y="300.0" font-size="9.5" fill="#2a2aff" text-anchor="middle" textLength="11.2" lengthAdjust="spacingAndGlyphs">2,9</text>
<text x="791.7" y="210.3" font-size="20.5" fill="#111" text-anchor="middle" textLength="12.0" lengthAdjust="spacingAndGlyphs">A</text>
<path class="k07" d="M833.7 249.7A49.7 49.7 0 1 1 746.1 295.3"/>
<path class="k2" d="M743 284.2H754L784.2 302" />
<path class="k2" d="M788.3 302.8Q800 303 806.5 301.7Q813.5 299.5 814.2 290V258.5Q814.5 252 822.5 249.7H833.8" />
<path class="k2" d="M822.0 249.7L822.0 317.5"/>
<path class="k2" d="M814.2 290.0L814.2 322.2"/>
<path class="k2" d="M750.8 284.0L750.8 305.0"/>
<path class="k07" d="M745.0 295.3L769.0 295.3"/>
<path class="k1" d="M773.0 295.3L773.0 323.2"/>
<text x="771.3" y="274.2" font-size="9.5" fill="#2a2aff" text-anchor="start" textLength="16.7" lengthAdjust="spacingAndGlyphs">R0,8</text>
<path class="b1" d="M771 276.3H788.7L810 298.3" />
<path d="M810.3 298.6L804.1 294.8L806.7 292.3Z" fill="#0000ff"/>
<path class="b1" d="M784.5 305.0L784.5 367.5"/>
<path class="b1" d="M813.7 324.0L813.7 367.5"/>
<path class="b1" d="M784.5 365.5L813.7 365.5"/>
<path d="M784.5 365.5L792.0 363.6L792.0 367.4Z" fill="#0000ff"/>
<path d="M813.7 365.5L806.2 367.4L806.2 363.6Z" fill="#0000ff"/>
<text x="799.0" y="362.5" font-size="9.5" fill="#2a2aff" text-anchor="middle" textLength="11.2" lengthAdjust="spacingAndGlyphs">1,8</text>
<path class="b1" d="M806.0 302.5L850.0 302.5"/>
<path class="b1" d="M848.3 302.5L848.3 359.0"/>
<path d="M848.3 302.5L850.2 310.0L846.4 310.0Z" fill="#0000ff"/>
<text x="845.5" y="342.5" font-size="9.5" fill="#2a2aff" text-anchor="middle" textLength="32.0" lengthAdjust="spacingAndGlyphs" transform="rotate(-90 845.5 342.5)"><tspan font-weight="bold" stroke="#2a2aff" stroke-width="0.5">ø</tspan>9,7h13</text>
<text x="731.0" y="378.3" font-size="20.5" fill="#111" text-anchor="middle" textLength="10.0" lengthAdjust="spacingAndGlyphs">B</text>
<path class="k07" d="M766.1 412.8A42.5 42.5 0 1 1 689.2 446"/>
<path class="k2" d="M690.7 446H707.4Q713 446.5 719.4 449.3" />
<path class="k2" d="M721.3 449.6Q729 449.8 733.3 448.3Q739 446.5 739.8 441V421L748 412.8H766" />
<path class="k2" d="M748.1 412.8L748.1 474.3"/>
<path class="k2" d="M739.8 440.0L739.8 477.4"/>
<path class="k2" d="M706.9 446.0L706.9 470.6"/>
<text x="702.4" y="428.0" font-size="9.5" fill="#2a2aff" text-anchor="start" textLength="16.6" lengthAdjust="spacingAndGlyphs">R0,6</text>
<path class="b1" d="M702 430.4H719L737.4 446" />
<path d="M737.6 446.2L731.2 442.9L733.6 440.2Z" fill="#0000ff"/>
<path class="b1" d="M692.6 421Q684.5 429 681.5 440" />
<path d="M681.3 440.5L681.4 433.3L684.9 434.2Z" fill="#0000ff"/>
<path class="b1" d="M681.5 440.0L720.4 449.6"/>
<text x="683.0" y="431.0" font-size="9" fill="#2a2aff" text-anchor="middle" textLength="11.0" lengthAdjust="spacingAndGlyphs" transform="rotate(-62 683.0 431.0)">15°</text>
<path class="b1" d="M659.3 446.5L692.6 446.5"/>
<path class="b1" d="M659.3 449.4L721.0 449.4"/>
<path class="b1" d="M661.7 418.7L661.7 457.0"/>
<path d="M661.7 446.5L659.9 440.0L663.5 440.0Z" fill="#0000ff"/>
<path d="M661.7 449.4L663.5 455.9L659.9 455.9Z" fill="#0000ff"/>
<path class="b1" d="M681.5 449.4L681.5 457.0"/>
<path d="M681.5 449.4L683.3 455.9L679.7 455.9Z" fill="#0000ff"/>
<text x="658.5" y="438.0" font-size="9" fill="#2a2aff" text-anchor="start" textLength="10.5" lengthAdjust="spacingAndGlyphs" transform="rotate(-90 658.5 438.0)">0,2</text>
<text x="654.5" y="426.5" font-size="3.6" fill="#2a2aff" text-anchor="start" textLength="6.0" lengthAdjust="spacingAndGlyphs" transform="rotate(-90 654.5 426.5)">+0,1</text>
<text x="658.5" y="426.5" font-size="3.6" fill="#2a2aff" text-anchor="start" textLength="1.7" lengthAdjust="spacingAndGlyphs" transform="rotate(-90 658.5 426.5)">0</text>
<path class="b1" d="M707.4 474.3L707.4 518.7"/>
<path class="b1" d="M740.7 480.2L740.7 518.7"/>
<path class="b1" d="M707.4 516.5L740.7 516.5"/>
<path d="M707.4 516.5L714.9 514.6L714.9 518.4Z" fill="#0000ff"/>
<path d="M740.7 516.5L733.2 518.4L733.2 514.6Z" fill="#0000ff"/>
<text x="717.2" y="513.5" font-size="9.5" fill="#2a2aff" text-anchor="start" textLength="4.5" lengthAdjust="spacingAndGlyphs">2</text>
<text x="722.5" y="509.5" font-size="3.6" fill="#2a2aff" text-anchor="start" textLength="6.5" lengthAdjust="spacingAndGlyphs">+0,2</text>
<text x="722.5" y="513.5" font-size="3.6" fill="#2a2aff" text-anchor="start" textLength="1.7" lengthAdjust="spacingAndGlyphs">0</text>
<text x="721.4" y="567.5" font-size="20.5" fill="#111" text-anchor="middle" textLength="10.0" lengthAdjust="spacingAndGlyphs">C</text>
<rect class="b2" x="662.5" y="589.0" width="48.1" height="14.0" rx="1.2"/>
<path class="b15" d="M676.4 589.0L676.4 603.0"/>
<path class="b15" d="M695.8 589.0L695.8 603.0"/>
<path class="b1" d="M669.5 591.8V600.0M665.5 600.0H673.5" />
<text x="686.1" y="599.2" font-size="8.5" fill="#2a2aff" text-anchor="middle" textLength="14.1" lengthAdjust="spacingAndGlyphs">0,01</text>
<text x="703.2" y="599.2" font-size="8.5" fill="#2a2aff" text-anchor="middle" textLength="4.8" lengthAdjust="spacingAndGlyphs">B</text>
<path class="b1" d="M710.6 595.8L737.5 595.8"/>
<path d="M737.5 595.8L730.0 597.7L730.0 593.9Z" fill="#0000ff"/>
<path class="b1" d="M737.5 589.0L737.5 634.0"/>
<path class="b15" d="M759 602.5V611.5H765" />
<text x="764.5" y="611.5" font-size="9" fill="#2a2aff" text-anchor="start" textLength="16.0" lengthAdjust="spacingAndGlyphs">-0,05</text>
<path class="b1" d="M780.6 613.9H757L738.6 633" />
<path d="M738.2 633.4L741.5 627.5L743.9 629.9Z" fill="#0000ff"/>
<path class="k07" d="M671.7 634.5A49.9 49.9 0 0 0 771.4 634.5"/>
<path class="k2" d="M671.7 634.2H705.6V645.5H738V634.2H771.4" />
<path class="k2" d="M705.6 645.0L705.6 680.7"/>
<path class="k2" d="M738.0 645.0L738.0 680.7"/>
<text x="707.3" y="641.5" font-size="8.5" fill="#2a2aff" text-anchor="start" textLength="15.5" lengthAdjust="spacingAndGlyphs">R0,1</text>
<text x="723.5" y="638.0" font-size="3.4" fill="#2a2aff" text-anchor="start" textLength="1.6" lengthAdjust="spacingAndGlyphs">0</text>
<text x="723.5" y="641.5" font-size="3.4" fill="#2a2aff" text-anchor="start" textLength="8.0" lengthAdjust="spacingAndGlyphs">-0,05</text>
<path class="b1" d="M738.0 645.8L789.7 645.8"/>
<path class="b1" d="M787.5 645.8L787.5 691.0"/>
<path d="M787.5 645.8L789.4 653.3L785.6 653.3Z" fill="#0000ff"/>
<text x="784.7" y="676.0" font-size="9.5" fill="#2a2aff" text-anchor="middle" textLength="30.0" lengthAdjust="spacingAndGlyphs" transform="rotate(-90 784.7 676.0)"><tspan font-weight="bold" stroke="#2a2aff" stroke-width="0.5">ø</tspan>19h11</text>
<text x="656.4" y="697.2" font-size="9.5" fill="#2a2aff" text-anchor="start" textLength="27.0" lengthAdjust="spacingAndGlyphs">1,3H13</text>
<path class="b1" d="M656.4 699.4L745.3 699.4"/>
<path d="M705.6 699.4L698.1 701.3L698.1 697.5Z" fill="#0000ff"/>
<path d="M738.0 699.4L745.5 697.5L745.5 701.3Z" fill="#0000ff"/>
<path class="b1" d="M705.6 684.0L705.6 701.5"/>
<path class="b1" d="M738.0 684.0L738.0 701.5"/>
<text x="859.7" y="649.4" font-size="20.5" fill="#111" text-anchor="middle" textLength="10.0" lengthAdjust="spacingAndGlyphs">D</text>
<defs><pattern id="h2" width="4.3" height="4.3" patternUnits="userSpaceOnUse" patternTransform="rotate(-45)"><line x1="0" y1="0.5" x2="4.3" y2="0.5" stroke="#1a1a1a" stroke-width="1"/></pattern></defs>
<path d="M848 668.5A57.6 57.6 0 1 1 848 780.7Z" fill="url(#h2)" stroke="#333" stroke-width="0.8"/>
<path d="M852 699H889.7L902.8 724.6L889.7 749.4H852Z" fill="#fff"/>
<path class="k2" d="M852 699H889.7M889.7 749.4H852M889.7 699L902.8 724.6L889.7 749.4" />
<path class="k25" d="M852.3 699.0L852.3 749.4"/>
<path d="M847.6 667V783" stroke="#7ff0f0" stroke-width="2" fill="none"/>
<path d="M849.6 667V783" stroke="#111" stroke-width="2.2" stroke-dasharray="6.5 3.5" fill="none"/>
<path d="M889.7 700V749" stroke="#ff80e0" stroke-width="2.4" stroke-dasharray="8 4" fill="none"/>
<path d="M860.3 668V782" stroke="#222" stroke-width="0.9" stroke-dasharray="9 5" fill="none"/>
<path d="M843 724.6H917" stroke="#c81e1e" stroke-width="0.9" stroke-dasharray="9 2.5 1.5 2.5" fill="none"/>
<path class="b1" d="M820.8 699.0L848.0 699.0"/>
<path class="b1" d="M820.8 749.4L848.0 749.4"/>
<path class="b1" d="M822.8 699.0L822.8 749.4"/>
<path d="M822.8 699.0L824.7 706.5L820.9 706.5Z" fill="#0000ff"/>
<path d="M822.8 749.4L820.9 741.9L824.7 741.9Z" fill="#0000ff"/>
<text x="820.0" y="725.0" font-size="9.5" fill="#2a2aff" text-anchor="middle" textLength="23.0" lengthAdjust="spacingAndGlyphs" transform="rotate(-90 820.0 725.0)"><tspan font-weight="bold" stroke="#2a2aff" stroke-width="0.5">ø</tspan>3,35</text>
<path class="b1" d="M807 674.4A107 107 0 0 0 807 775.8"/>
<path class="b1" d="M807.0 674.4L848.0 696.7"/>
<path class="b1" d="M807.0 775.8L848.0 753.6"/>
<path d="M807.3 673.8L805.4 680.8L802.2 679.0Z" fill="#0000ff"/>
<path d="M807.3 776.4L802.2 771.2L805.4 769.4Z" fill="#0000ff"/>
<text x="792.5" y="725.0" font-size="9" fill="#2a2aff" text-anchor="middle" textLength="11.0" lengthAdjust="spacingAndGlyphs" transform="rotate(-90 792.5 725.0)">60°</text>
<path d="M889.7 699H929M889.7 749.4H929" stroke="#0000ff" stroke-width="1" stroke-dasharray="5 2.5" fill="none"/>
<path class="b1" d="M926.4 680.0L926.4 758.0"/>
<path d="M926.4 699.0L924.6 692.5L928.2 692.5Z" fill="#0000ff"/>
<path d="M926.4 749.4L928.2 755.9L924.6 755.9Z" fill="#0000ff"/>
<text x="923.5" y="687.0" font-size="9.5" fill="#2a2aff" text-anchor="middle" textLength="10.0" lengthAdjust="spacingAndGlyphs" transform="rotate(-90 923.5 687.0)"><tspan font-weight="bold" stroke="#2a2aff" stroke-width="0.5">ø</tspan>3</text>
<path d="M848 784V809M889.7 750V809M848 807H889.7" stroke="#ff8000" stroke-width="1" fill="none"/>
<path d="M848.0 807.0L855.5 805.1L855.5 808.9Z" fill="#ff8000"/>
<path d="M889.7 807.0L882.2 808.9L882.2 805.1Z" fill="#ff8000"/>
<text x="869.0" y="804.0" font-size="9.5" fill="#ff8a10" text-anchor="middle" textLength="11.2" lengthAdjust="spacingAndGlyphs">2,5</text>
<rect x="624.5" y="182.5" width="1104" height="764" fill="none" stroke="#222" stroke-width="1.1"/>
<path class="t15" d="M1204 946.5V753H1728.5"/>
<path class="t15" d="M1204 797.4H1728.5M1204 884.9H1728.5M1330.8 753V884.9M1414 753V946.5"/>
<path class="t1" d="M1204 775.6H1330.8M1204 863.3H1330.8"/>
<path class="t1" d="M1414 767.7H1728M1414 782.9H1728M1457.6 753V797.4M1593.2 753V797.4M1674 753V797.4"/>
<path class="t1" d="M1484.5 767.7V797.4M1512 767.7V797.4M1539.3 767.7V797.4M1566 767.7V797.4M1620 767.7V797.4M1646.9 767.7V797.4M1700.8 767.7V797.4"/>
<path class="t07" d="M1414 753L1457.6 767.7M1414 767.7L1457.6 753"/>
<path class="t1" d="M1364 797.4V884.9M1330.8 819.3H1414M1330.8 841.2H1414M1330.8 863H1414"/>
<path class="t07" d="M1330.8 797.4L1364 819.3M1330.8 819.3L1364 797.4"/>
<path class="t1" d="M1496.7 884.9V946.5M1414 918.4H1728M1455.3 918.4V946.5M1496.7 901.8H1728M1611.9 884.9V918.4M1553.8 901.8V918.4M1669.6 901.8V918.4"/>
<text x="1208.0" y="766.5" font-size="3.6" fill="#333" text-anchor="start" textLength="22.0" lengthAdjust="spacingAndGlyphs">MASS:  -</text>
<text x="1208.0" y="788.5" font-size="3.6" fill="#333" text-anchor="start" textLength="24.0" lengthAdjust="spacingAndGlyphs">STOCK:  -</text>
<text x="1372.5" y="760.5" font-size="3.6" fill="#333" text-anchor="middle" textLength="75.0" lengthAdjust="spacingAndGlyphs">SURFACE FINISH ISO 1302 / 2002</text>
<path class="t15" d="M1350 785.2H1358.5L1354.5 791.5L1350 785.2M1354.5 791.5L1366 771H1395"/>
<text x="1369.0" y="779.5" font-size="7.5" fill="#222" text-anchor="start" textLength="23.0" lengthAdjust="spacingAndGlyphs">Ra 3,2</text>
<text x="1525.0" y="762.3" font-size="3.6" fill="#333" text-anchor="middle" textLength="18.0" lengthAdjust="spacingAndGlyphs">LENGTH</text>
<text x="1633.0" y="762.3" font-size="3.6" fill="#333" text-anchor="middle" textLength="18.0" lengthAdjust="spacingAndGlyphs">RADIUS</text>
<text x="1701.0" y="762.3" font-size="3.6" fill="#333" text-anchor="middle" textLength="15.0" lengthAdjust="spacingAndGlyphs">ANGLE</text>
<text x="1435.5" y="777.0" font-size="3.6" fill="#333" text-anchor="middle" textLength="9.0" lengthAdjust="spacingAndGlyphs">DIM</text>
<text x="1435.5" y="792.0" font-size="3.6" fill="#333" text-anchor="middle" textLength="28.0" lengthAdjust="spacingAndGlyphs">TOLERANCE</text>
<text x="1471.0" y="777.0" font-size="3.6" fill="#333" text-anchor="middle" textLength="11.0" lengthAdjust="spacingAndGlyphs">&gt; 0.5</text>
<text x="1471.0" y="792.0" font-size="3.6" fill="#333" text-anchor="middle" textLength="12.0" lengthAdjust="spacingAndGlyphs">± 0.05</text>
<text x="1498.0" y="777.0" font-size="3.6" fill="#333" text-anchor="middle" textLength="11.0" lengthAdjust="spacingAndGlyphs">&gt; 10</text>
<text x="1498.0" y="792.0" font-size="3.6" fill="#333" text-anchor="middle" textLength="12.0" lengthAdjust="spacingAndGlyphs">± 0.1</text>
<text x="1525.5" y="777.0" font-size="3.6" fill="#333" text-anchor="middle" textLength="11.0" lengthAdjust="spacingAndGlyphs">&gt; 30</text>
<text x="1525.5" y="792.0" font-size="3.6" fill="#333" text-anchor="middle" textLength="12.0" lengthAdjust="spacingAndGlyphs">± 0.15</text>
<text x="1552.5" y="777.0" font-size="3.6" fill="#333" text-anchor="middle" textLength="11.0" lengthAdjust="spacingAndGlyphs">&gt; 120</text>
<text x="1552.5" y="792.0" font-size="3.6" fill="#333" text-anchor="middle" textLength="12.0" lengthAdjust="spacingAndGlyphs">± 0.2</text>
<text x="1579.5" y="777.0" font-size="3.6" fill="#333" text-anchor="middle" textLength="11.0" lengthAdjust="spacingAndGlyphs">&gt; 500</text>
<text x="1579.5" y="792.0" font-size="3.6" fill="#333" text-anchor="middle" textLength="12.0" lengthAdjust="spacingAndGlyphs">± 0.25</text>
<text x="1606.5" y="777.0" font-size="3.6" fill="#333" text-anchor="middle" textLength="11.0" lengthAdjust="spacingAndGlyphs">&gt; 0.5</text>
<text x="1606.5" y="792.0" font-size="3.6" fill="#333" text-anchor="middle" textLength="12.0" lengthAdjust="spacingAndGlyphs">± 0.1</text>
<text x="1633.5" y="777.0" font-size="3.6" fill="#333" text-anchor="middle" textLength="11.0" lengthAdjust="spacingAndGlyphs">&gt; 30</text>
<text x="1633.5" y="792.0" font-size="3.6" fill="#333" text-anchor="middle" textLength="12.0" lengthAdjust="spacingAndGlyphs">± 0.2</text>
<text x="1660.5" y="777.0" font-size="3.6" fill="#333" text-anchor="middle" textLength="11.0" lengthAdjust="spacingAndGlyphs">&gt; 100</text>
<text x="1660.5" y="792.0" font-size="3.6" fill="#333" text-anchor="middle" textLength="12.0" lengthAdjust="spacingAndGlyphs">± 0.25</text>
<text x="1687.5" y="777.0" font-size="3.6" fill="#333" text-anchor="middle" textLength="11.0" lengthAdjust="spacingAndGlyphs">&gt; 1°</text>
<text x="1687.5" y="792.0" font-size="3.6" fill="#333" text-anchor="middle" textLength="12.0" lengthAdjust="spacingAndGlyphs">± 0.1°</text>
<text x="1714.5" y="777.0" font-size="3.6" fill="#333" text-anchor="middle" textLength="11.0" lengthAdjust="spacingAndGlyphs">&gt; 45°</text>
<text x="1714.5" y="792.0" font-size="3.6" fill="#333" text-anchor="middle" textLength="12.0" lengthAdjust="spacingAndGlyphs">± 0.2°</text>
<text x="1208.0" y="804.5" font-size="3.6" fill="#333" text-anchor="start" textLength="40.0" lengthAdjust="spacingAndGlyphs">EDGES: ISO 13715</text>
<text x="1267.0" y="878.0" font-size="3.6" fill="#333" text-anchor="middle" textLength="88.0" lengthAdjust="spacingAndGlyphs">GENERAL TOLERANCES : ISO 2768 - M K</text>
<path class="t15" d="M1239 828V835.5H1247"/>
<text x="1241.0" y="823.0" font-size="7" fill="#222" text-anchor="start" textLength="15.0" lengthAdjust="spacingAndGlyphs">-0,2</text>
<text x="1246.5" y="834.5" font-size="7" fill="#222" text-anchor="start" textLength="11.0" lengthAdjust="spacingAndGlyphs">-0,4</text>
<path class="t1" d="M1255.5 839.7H1236L1226 849.5M1216 849.5H1226V859.5"/>
<path class="t15" d="M1216 849.5H1226V859.5"/>
<path class="t15" d="M1297.5 828V835.5H1305.5"/>
<text x="1299.0" y="823.0" font-size="7" fill="#222" text-anchor="start" textLength="15.0" lengthAdjust="spacingAndGlyphs">+0,3</text>
<text x="1304.5" y="834.5" font-size="7" fill="#222" text-anchor="start" textLength="11.0" lengthAdjust="spacingAndGlyphs">+0,1</text>
<path class="t1" d="M1313.5 839.7H1295L1285.5 849"/>
<path class="t15" d="M1285 839.5V849.5H1295"/>
<path d="M1285.3 849.3L1288.0 843.5L1291.1 846.6Z" fill="#111"/>
<text x="1389.0" y="804.0" font-size="3.6" fill="#333" text-anchor="middle" textLength="13.0" lengthAdjust="spacingAndGlyphs">NAME</text>
<text x="1389.0" y="815.0" font-size="3.6" fill="#333" text-anchor="middle" textLength="12.0" lengthAdjust="spacingAndGlyphs">DATE</text>
<text x="1347.5" y="832.0" font-size="3.6" fill="#333" text-anchor="middle" textLength="13.0" lengthAdjust="spacingAndGlyphs">DRAW</text>
<text x="1347.5" y="854.0" font-size="3.6" fill="#333" text-anchor="middle" textLength="14.0" lengthAdjust="spacingAndGlyphs">CHECK</text>
<text x="1347.5" y="876.0" font-size="3.6" fill="#333" text-anchor="middle" textLength="13.0" lengthAdjust="spacingAndGlyphs">PRINT</text>
<text x="1389.0" y="826.0" font-size="3.6" fill="#3030ff" text-anchor="middle" textLength="9.0" lengthAdjust="spacingAndGlyphs">ROB</text>
<text x="1389.0" y="837.0" font-size="3.6" fill="#3030ff" text-anchor="middle" textLength="26.0" lengthAdjust="spacingAndGlyphs">08/11/2021</text>
<text x="1389.0" y="848.5" font-size="3.6" fill="#3030ff" text-anchor="middle" textLength="1.0" lengthAdjust="spacingAndGlyphs">-</text>
<text x="1389.0" y="859.5" font-size="3.6" fill="#3030ff" text-anchor="middle" textLength="1.0" lengthAdjust="spacingAndGlyphs">-</text>
<text x="1389.0" y="870.5" font-size="3.6" fill="#3030ff" text-anchor="middle" textLength="1.0" lengthAdjust="spacingAndGlyphs">-</text>
<text x="1389.0" y="881.5" font-size="3.6" fill="#3030ff" text-anchor="middle" textLength="1.0" lengthAdjust="spacingAndGlyphs">-</text>
<text x="1571.0" y="813.8" font-size="12" fill="#2a2aff" text-anchor="middle" textLength="35.0" lengthAdjust="spacingAndGlyphs">AXLE 1</text>
<text x="1571.0" y="836.2" font-size="12" fill="#2a2aff" text-anchor="middle" textLength="51.0" lengthAdjust="spacingAndGlyphs">GEARBOX</text>
<text x="1571.0" y="857.0" font-size="10" fill="#2a2aff" text-anchor="middle" textLength="2.8" lengthAdjust="spacingAndGlyphs">-</text>
<text x="1571.0" y="879.0" font-size="10" fill="#2a2aff" text-anchor="middle" textLength="2.8" lengthAdjust="spacingAndGlyphs">-</text>
<text x="1501.5" y="895.0" font-size="3.6" fill="#333" text-anchor="start" textLength="32.0" lengthAdjust="spacingAndGlyphs">MATERIAL:  -</text>
<text x="1617.0" y="895.0" font-size="3.6" fill="#333" text-anchor="start" textLength="29.0" lengthAdjust="spacingAndGlyphs">COATING:  -</text>
<text x="1501.5" y="912.0" font-size="3.6" fill="#333" text-anchor="start" textLength="32.0" lengthAdjust="spacingAndGlyphs">QUANTITY :  -</text>
<text x="1558.5" y="912.0" font-size="3.6" fill="#333" text-anchor="start" textLength="28.0" lengthAdjust="spacingAndGlyphs">BOM ID :  -</text>
<text x="1617.0" y="912.0" font-size="3.6" fill="#333" text-anchor="start" textLength="18.0" lengthAdjust="spacingAndGlyphs">SHEET:</text>
<text x="1638.5" y="912.0" font-size="3.6" fill="#3030ff" text-anchor="start" textLength="7.0" lengthAdjust="spacingAndGlyphs">1/1</text>
<text x="1674.0" y="912.0" font-size="3.6" fill="#333" text-anchor="start" textLength="29.0" lengthAdjust="spacingAndGlyphs">BUNDLE :  -</text>
<text x="1501.5" y="926.0" font-size="3.6" fill="#333" text-anchor="start" textLength="35.0" lengthAdjust="spacingAndGlyphs">PART NUMBER:</text>
<text x="1721.0" y="936.5" font-size="10" fill="#2a2aff" text-anchor="middle" textLength="4.0" lengthAdjust="spacingAndGlyphs">-</text>
<text x="1435.0" y="938.3" font-size="13" fill="#2a2aff" text-anchor="middle" textLength="19.0" lengthAdjust="spacingAndGlyphs">1 : 1</text>
<text x="1475.7" y="938.3" font-size="13" fill="#2a2aff" text-anchor="middle" textLength="13.0" lengthAdjust="spacingAndGlyphs">A3</text>
<path class="t15" d="M1427.5 896.5L1449.5 891.5V912.5L1427.5 908Z"/>
<circle class="t15" cx="1471.5" cy="902.3" r="10.5"/><circle class="t15" cx="1471.5" cy="902.3" r="5"/>
<path d="M1422 902.3H1488M1471.5 889V916" stroke="#d03030" stroke-width="0.7" stroke-dasharray="6 1.5 1.5 1.5" fill="none"/>
<text font-style="italic" stroke="#0a0a0a" stroke-width="0.5" x="1320.0" y="920.8" font-size="28" fill="#0a0a0a" text-anchor="middle" textLength="107.0" lengthAdjust="spacingAndGlyphs">TopSolid</text>
<path d="M1242 932Q1262 925 1272 918.5L1270.5 923.5Q1320 924 1377 925.5Q1320 923.5 1268 927Q1255 929 1242 932Z" fill="#e8121c"/>
<g transform="translate(851,895.5) rotate(-11.6)"><defs><linearGradient id="cg" x1="0" y1="0" x2="0" y2="1"><stop offset="0" stop-color="#5a5a5a"/><stop offset="0.3" stop-color="#767676"/><stop offset="0.6" stop-color="#9a9a9a"/><stop offset="0.82" stop-color="#6c6c6c"/><stop offset="1" stop-color="#484848"/></linearGradient><linearGradient id="fg" x1="0" y1="0" x2="0" y2="1"><stop offset="0" stop-color="#8a8a8a"/><stop offset="0.5" stop-color="#c4c4c4"/><stop offset="1" stop-color="#7a7a7a"/></linearGradient><linearGradient id="tg2" x1="0" y1="0" x2="0" y2="1"><stop offset="0" stop-color="#4a4a4a"/><stop offset="0.55" stop-color="#8a8a8a"/><stop offset="1" stop-color="#3c3c3c"/></linearGradient></defs><path d="M257.7 -20.2L325.9 -20.2A8.7 20.2 0 0 1 325.9 20.2L257.7 20.2A8.7 20.2 0 0 1 257.7 -20.2Z" fill="url(#cg)" stroke="#050505" stroke-width="1.1"/><ellipse cx="257.7" cy="0" rx="8.7" ry="20.2" fill="url(#fg)" stroke="#050505" stroke-width="1.1"/><path d="M210.3 -32.3L257.7 -32.3A13.9 32.3 0 0 1 257.7 32.3L210.3 32.3A13.9 32.3 0 0 1 210.3 -32.3Z" fill="url(#cg)" stroke="#050505" stroke-width="1.1"/><ellipse cx="210.3" cy="0" rx="13.9" ry="32.3" fill="url(#fg)" stroke="#050505" stroke-width="1.1"/><path d="M204.7 -31.1L210.3 -31.1A13.4 31.1 0 0 1 210.3 31.1L204.7 31.1A13.4 31.1 0 0 1 204.7 -31.1Z" fill="url(#cg)" stroke="#050505" stroke-width="1.1"/><ellipse cx="204.7" cy="0" rx="13.4" ry="31.1" fill="#555" stroke="#050505" stroke-width="1.1"/><path d="M189.5 -40.4L204.7 -40.4A17.4 40.4 0 0 1 204.7 40.4L189.5 40.4A17.4 40.4 0 0 1 189.5 -40.4Z" fill="url(#cg)" stroke="#050505" stroke-width="1.1"/><ellipse cx="189.5" cy="0" rx="17.4" ry="40.4" fill="url(#fg)" stroke="#050505" stroke-width="1.1"/><path d="M136.4 -50.5L189.5 -50.5A21.7 50.5 0 0 1 189.5 50.5L136.4 50.5A21.7 50.5 0 0 1 136.4 -50.5Z" fill="url(#cg)" stroke="#050505" stroke-width="1.1"/><ellipse cx="136.4" cy="0" rx="21.7" ry="50.5" fill="url(#fg)" stroke="#050505" stroke-width="1.1"/><path d="M130.8 -38.8L136.4 -38.8A16.7 38.8 0 0 1 136.4 38.8L130.8 38.8A16.7 38.8 0 0 1 130.8 -38.8Z" fill="url(#cg)" stroke="#050505" stroke-width="1.1"/><ellipse cx="130.8" cy="0" rx="16.7" ry="38.8" fill="#555" stroke="#050505" stroke-width="1.1"/><path d="M106.1 -40.4L130.8 -40.4A17.4 40.4 0 0 1 130.8 40.4L106.1 40.4A17.4 40.4 0 0 1 106.1 -40.4Z" fill="url(#cg)" stroke="#050505" stroke-width="1.1"/><ellipse cx="106.1" cy="0" rx="17.4" ry="40.4" fill="url(#fg)" stroke="#050505" stroke-width="1.1"/><path d="M101.2 -38.0L106.1 -38.0A16.3 38.0 0 0 1 106.1 38.0L101.2 38.0A16.3 38.0 0 0 1 101.2 -38.0Z" fill="url(#cg)" stroke="#050505" stroke-width="1.1"/><ellipse cx="101.2" cy="0" rx="16.3" ry="38.0" fill="#555" stroke="#050505" stroke-width="1.1"/><path d="M83.4 -40.4L101.2 -40.4A17.4 40.4 0 0 1 101.2 40.4L83.4 40.4A17.4 40.4 0 0 1 83.4 -40.4Z" fill="url(#cg)" stroke="#050505" stroke-width="1.1"/><ellipse cx="83.4" cy="0" rx="17.4" ry="40.4" fill="url(#fg)" stroke="#050505" stroke-width="1.1"/><path d="M76.9 -30.7L83.4 -30.7A13.2 30.7 0 0 1 83.4 30.7L76.9 30.7A13.2 30.7 0 0 1 76.9 -30.7Z" fill="url(#cg)" stroke="#050505" stroke-width="1.1"/><ellipse cx="76.9" cy="0" rx="13.2" ry="30.7" fill="#555" stroke="#050505" stroke-width="1.1"/><path d="M53.1 -33.1L76.9 -33.1A14.2 33.1 0 0 1 76.9 33.1L53.1 33.1A14.2 33.1 0 0 1 53.1 -33.1Z" fill="url(#cg)" stroke="#050505" stroke-width="1.1"/><ellipse cx="53.1" cy="0" rx="14.2" ry="33.1" fill="url(#fg)" stroke="#050505" stroke-width="1.1"/><path d="M38.7 -18.6L53.1 -18.6A8.0 18.6 0 0 1 53.1 18.6L38.7 18.6A8.0 18.6 0 0 1 38.7 -18.6Z" fill="url(#cg)" stroke="#050505" stroke-width="1.1"/><ellipse cx="38.7" cy="0" rx="8.0" ry="18.6" fill="url(#fg)" stroke="#050505" stroke-width="1.1"/><path d="M0.0 -24.2L38.7 -24.2A10.4 24.2 0 0 1 38.7 24.2L0.0 24.2A10.4 24.2 0 0 1 0.0 -24.2Z" fill="url(#tg2)" stroke="#050505" stroke-width="1.1"/><path d="M5.3 -23.7A10.4 24.2 0 0 0 5.3 23.7" fill="none" stroke="#262626" stroke-width="1.9" opacity="0.85"/><path d="M9.6 -23.7A10.4 24.2 0 0 0 9.6 23.7" fill="none" stroke="#262626" stroke-width="1.9" opacity="0.85"/><path d="M13.9 -23.7A10.4 24.2 0 0 0 13.9 23.7" fill="none" stroke="#262626" stroke-width="1.9" opacity="0.85"/><path d="M18.2 -23.7A10.4 24.2 0 0 0 18.2 23.7" fill="none" stroke="#262626" stroke-width="1.9" opacity="0.85"/><path d="M22.5 -23.7A10.4 24.2 0 0 0 22.5 23.7" fill="none" stroke="#262626" stroke-width="1.9" opacity="0.85"/><path d="M26.8 -23.7A10.4 24.2 0 0 0 26.8 23.7" fill="none" stroke="#262626" stroke-width="1.9" opacity="0.85"/><path d="M31.1 -23.7A10.4 24.2 0 0 0 31.1 23.7" fill="none" stroke="#262626" stroke-width="1.9" opacity="0.85"/><path d="M35.4 -23.7A10.4 24.2 0 0 0 35.4 23.7" fill="none" stroke="#262626" stroke-width="1.9" opacity="0.85"/><ellipse cx="0.0" cy="0" rx="10.4" ry="24.2" fill="#6a6a6a" stroke="#050505" stroke-width="1.1"/><ellipse cx="1.0" cy="0" rx="8.9" ry="21.7" fill="#707070" stroke="#e0e0e0" stroke-width="0.8"/><ellipse cx="0.5" cy="1" rx="2.2" ry="4.8" fill="#3a3a3a" stroke="#000" stroke-width="1.2"/><ellipse cx="288.8" cy="-15.5" rx="10" ry="2.6" fill="#9a9a9a" stroke="#111" stroke-width="0.9" transform="rotate(1 288.8 -15.5)"/></g></svg>
<svg style="left:458px;top:119px" width="25" height="20" viewBox="0 0 25 20"><defs><linearGradient id="gk" x1="0" y1="0" x2="0" y2="1"><stop offset="0" stop-color="#5ae83a"/><stop offset="1" stop-color="#10b010"/></linearGradient></defs><path d="M0.5 8L4.5 5L9.5 10.5L21 1L24.5 4L10 19Z" fill="url(#gk)" stroke="#0a8a0a" stroke-width="0.6"/></svg>
<svg style="left:490px;top:121px" width="17" height="18" viewBox="0 0 17 18"><defs><linearGradient id="gx" x1="0" y1="0" x2="0" y2="1"><stop offset="0" stop-color="#ff6a6a"/><stop offset="1" stop-color="#e01414"/></linearGradient></defs><path d="M0.5 3L3 0.5L8 5.5L13 0.5L15.8 3L10.8 8.5L16 14L13.2 16.8L8 11.5L3 16.8L0.3 14L5.3 8.5Z" fill="url(#gx)" stroke="#b00a0a" stroke-width="0.6"/></svg>
<svg style="left:518px;top:118px" width="15" height="25" viewBox="0 0 15 25"><path d="M3.5 1H11.5Q12.5 2.5 10.5 3.5V9Q14 10.5 13.5 13H1.5Q1 10.5 4.5 9V3.5Q2.5 2.5 3.5 1Z" fill="#2a8af8" stroke="#0a5ae0" stroke-width="0.7"/><path d="M6 3.5V9" stroke="#9ad0ff" stroke-width="1.4"/><path d="M7.5 13V24" stroke="#f4f8ff" stroke-width="1.3"/></svg>
<span class="t" style="left:548.5px;top:116.5px;font-size:24px;line-height:24px;font-weight:bold;color:#1a8af4;transform:scaleX(.85);transform-origin:0 0">?</span>
<svg style="left:455px;top:141px" width="38" height="38" viewBox="-19 -19 38 38"><circle r="17.2" fill="#fff" stroke="#161616" stroke-width="1.6"/><circle r="15.6" fill="none" stroke="#8c8c8c" stroke-width="1.7"/><circle r="14.6" fill="none" stroke="#e8e8e8" stroke-width="0.8"/><path d="M-11.5 -6V10M11.5 -6V10" stroke="#6a78e0" stroke-width="1"/><path d="M-7 -3.2H7" stroke="#1c7be8" stroke-width="1.3"/><path d="M-11 -3.2l5.5 -2.2v4.4zM11 -3.2l-5.5 -2.2v4.4z" fill="#1c7be8"/></svg>
<svg style="left:455px;top:182px" width="38" height="38" viewBox="-19 -19 38 38"><circle r="17.2" fill="#fff" stroke="#161616" stroke-width="1.6"/><circle r="15.6" fill="none" stroke="#8c8c8c" stroke-width="1.7"/><circle r="14.6" fill="none" stroke="#e8e8e8" stroke-width="0.8"/><circle cx="-7.5" cy="-6" r="2.2" fill="none" stroke="#1c7be8" stroke-width="1"/><path d="M-10.5 -3L-4.5 -9.5" stroke="#1c7be8" stroke-width="0.9"/><text x="-11" y="6" font-size="9" font-weight="bold" font-style="italic" fill="#1c7be8" font-family="Liberation Sans">A</text><text x="-2" y="7" font-size="17" font-weight="bold" fill="#cfe4f8" font-family="Liberation Sans">8</text><path d="M-12 10H12" stroke="#c4dcf6" stroke-width="1"/></svg>
<svg style="left:455px;top:223px" width="38" height="38" viewBox="-19 -19 38 38"><circle r="17.2" fill="#fff" stroke="#161616" stroke-width="1.6"/><circle r="15.6" fill="none" stroke="#8c8c8c" stroke-width="1.7"/><circle r="14.6" fill="none" stroke="#e8e8e8" stroke-width="0.8"/><text x="-12.5" y="7" font-size="17" font-weight="bold" fill="#cfe4f8" font-family="Liberation Sans">8</text><text x="-2.5" y="-2.5" font-size="7.5" font-weight="bold" fill="#1c7be8" font-family="Liberation Sans" textLength="13" lengthAdjust="spacingAndGlyphs">±0.1</text><path d="M-12 10H12" stroke="#c4dcf6" stroke-width="1"/></svg>
<svg style="left:455px;top:264px" width="38" height="38" viewBox="-19 -19 38 38"><circle r="17.2" fill="#fff" stroke="#161616" stroke-width="1.6"/><circle r="15.6" fill="none" stroke="#8c8c8c" stroke-width="1.7"/><circle r="14.6" fill="none" stroke="#e8e8e8" stroke-width="0.8"/><text x="-12" y="4" font-size="10" font-weight="bold" font-style="italic" fill="#1c7be8" font-family="Liberation Serif">A</text><text x="-6" y="6" font-size="19" font-style="italic" font-weight="bold" fill="#1c7be8" font-family="Liberation Serif">A</text><path d="M-10 8.5H11" stroke="#1c7be8" stroke-width="1.2"/></svg>
<svg style="left:455px;top:305px" width="38" height="38" viewBox="-19 -19 38 38"><circle r="17.2" fill="#fff" stroke="#161616" stroke-width="1.6"/><circle r="15.6" fill="none" stroke="#8c8c8c" stroke-width="1.7"/><circle r="14.6" fill="none" stroke="#e8e8e8" stroke-width="0.8"/><path d="M7.7 -2.1L11.3 -1.9L11.3 1.9L7.7 2.1L7.0 3.9L9.4 6.6L6.6 9.4L3.9 7.0L2.1 7.7L1.9 11.3L-1.9 11.3L-2.1 7.7L-3.9 7.0L-6.6 9.4L-9.4 6.6L-7.0 3.9L-7.7 2.1L-11.3 1.9L-11.3 -1.9L-7.7 -2.1L-7.0 -3.9L-9.4 -6.6L-6.6 -9.4L-3.9 -7.0L-2.1 -7.7L-1.9 -11.3L1.9 -11.3L2.1 -7.7L3.9 -7.0L6.6 -9.4L9.4 -6.6L7.0 -3.9Z" fill="#1a5cf8" stroke="#1a5cf8" stroke-width="1" stroke-linejoin="round"/><circle r="4" fill="#fff"/></svg>
<svg style="left:1871px;top:124px" width="24" height="24" viewBox="0 0 24 24"><path d="M12 1V23M1 12H23" stroke="#1a9af8" stroke-width="2"/><path d="M12 0l-3 4.5h6zM12 24l-3 -4.5h6zM0 12l4.5 -3v6zM24 12l-4.5 -3v6z" fill="#1a9af8"/></svg>
<svg style="left:1871px;top:155px" width="24" height="22" viewBox="0 0 24 22"><rect x="0.7" y="0.7" width="22.6" height="17" fill="#1a1af0" stroke="#d8dce8" stroke-width="1.4"/><path d="M1.5 1.5H11.5V5Q5 7 1.5 6ZM12.5 1.5H22.5V4Q17 7 12.5 5Z" fill="#7a8af8" opacity="0.8"/><path d="M12 1V17.5M1 9.5H23" stroke="#e8ecf8" stroke-width="1.2"/><path d="M9 18.5H15L16 20.5H8Z" fill="#b8b8c4"/></svg>
<svg style="left:1899.5px;top:164px" width="7" height="4" viewBox="0 0 7 4"><path d="M0 0H6L3 3.5Z" fill="#111"/></svg>
<svg style="left:1871px;top:186px" width="24" height="24" viewBox="0 0 24 24"><rect x="0.5" y="0.5" width="23" height="23" fill="none" stroke="#1414e0" stroke-width="1"/><path d="M14.5 14.5L22.5 22" stroke="#f0a020" stroke-width="3" stroke-linecap="round"/><path d="M14.5 14.5L22.5 22" stroke="#ffe0a0" stroke-width="1" stroke-linecap="round"/><circle cx="9.5" cy="9.5" r="7.3" fill="#a8c8f0" stroke="#8a96b8" stroke-width="1.4"/><path d="M3.5 8A6.2 6.2 0 0 1 15.5 8Q9.5 10 3.5 8Z" fill="#e8f2ff" opacity="0.85"/></svg>
<svg style="left:1872px;top:218px" width="24" height="24" viewBox="0 0 24 24"><path d="M14.5 14.5L22.5 22" stroke="#f0a020" stroke-width="3" stroke-linecap="round"/><path d="M14.5 14.5L22.5 22" stroke="#ffe0a0" stroke-width="1" stroke-linecap="round"/><circle cx="9.5" cy="9.5" r="7.3" fill="#a8c8f0" stroke="#8a96b8" stroke-width="1.4"/><path d="M3.5 8A6.2 6.2 0 0 1 15.5 8Q9.5 10 3.5 8Z" fill="#e8f2ff" opacity="0.85"/></svg>
<svg style="left:1871px;top:248px" width="24" height="24" viewBox="0 0 24 24"><path d="M2 14Q0 5 10 2Q20 -1 23 7Q25 14 18 16Q14 17 14 20Q13 24 8 23Q3 22 2 14Z" fill="#f4aa28" stroke="#c87c10" stroke-width="0.8"/><ellipse cx="7.5" cy="17.5" rx="2.5" ry="2" fill="#6a80a8"/><circle cx="7.5" cy="8" r="2.6" fill="#50e020"/><circle cx="14.5" cy="4.8" r="2.6" fill="#f01a60"/><circle cx="18" cy="11" r="2.6" fill="#2a50f0"/></svg>
<svg style="left:1871px;top:280px" width="24" height="24" viewBox="0 0 24 24"><path d="M0 11.5H22M0 16.5H22M0 21.5H22" stroke="#2a7af0" stroke-width="1"/><text x="11" y="18.5" font-size="24" font-weight="bold" fill="#f4b400" stroke="#c88a00" stroke-width="0.5" font-family="Liberation Sans">?</text></svg>
<div class="a" style="left:449px;top:1024px;width:1463px;height:1px;background:#b8b8c0;"></div>
<div class="a" style="left:449px;top:1025px;width:1px;height:22px;background:#3a3a44;"></div>
<div class="a" style="left:538.6px;top:1024px;width:31px;height:22.5px;background:#fff;border:1px solid #8a8a96;border-bottom:none;"></div>
<span class="t" style="top:1029.34px;font-size:12px;line-height:12px;color:#000;left:550.50px;transform-origin:0 0;">1</span>
<div class="a" style="left:575px;top:1024.5px;width:45px;height:18.5px;background:linear-gradient(#fbbf82,#fdd9ae);border:1px solid #e89a4c;border-top:none;border-radius:0 0 3px 3px;"></div>
<span class="t" style="top:1026.72px;font-size:12.5px;line-height:12.5px;color:#000;font-weight:bold;left:578.50px;transform-origin:0 0;transform:scaleX(0.9504);">Page1</span>
<svg style="left:456px;top:1030px;" width="80" height="13" viewBox="0 0 80 13"><g fill="#111"><rect x="0.7" y="1" width="2" height="10.5"/><path d="M11.5 1 V11.5 L4 6.2Z"/><path d="M29 1 V11.5 L22 6.2Z"/><path d="M46 1 V11.5 L53.5 6.2Z"/><path d="M65 1 V11.5 L72 6.2Z"/><rect x="73" y="1" width="2" height="10.5"/></g></svg>
<div class="a" style="left:1780px;top:1011.5px;width:57px;height:9.5px;background:#fa962d;border:1px solid #1e1e28;"></div>
<div class="a" style="left:1780px;top:1007.5px;width:1px;height:5px;background:#1e1e28;"></div>
<div class="a" style="left:1836px;top:1007.5px;width:1px;height:5px;background:#1e1e28;"></div>
<span class="t" style="top:995.00px;font-size:13px;line-height:13px;color:#222;left:1790.00px;transform-origin:0 0;">20mm</span>
<div class="a" style="left:1765px;top:1028px;width:120px;height:3px;background:#dfe3e6;border:1px solid #d0d4d8;"></div>
<svg style="left:1759.5px;top:1025px;" width="6" height="12" viewBox="0 0 6 12"><path d="M0 0 H6 V8 L3 11.5 L0 8 Z" fill="#0a74dc"/></svg>
<div class="a" style="left:1761.7px;top:1038px;width:1px;height:4px;background:#b0b0b8;"></div>
<div class="a" style="left:1875.3px;top:1038px;width:1px;height:4px;background:#b0b0b8;"></div>
<svg style="left:1893px;top:1029px;" width="14" height="14" viewBox="0 0 14 14"><g fill="#1c1c26"><rect x="0" y="0" width="6" height="6"/><rect x="8" y="0" width="6" height="6"/><rect x="0" y="8" width="6" height="6"/><rect x="8" y="8" width="6" height="6"/></g></svg>
<div class="a" style="left:1140px;top:1041px;width:80px;height:6px;border:1px solid #5a5a64;border-bottom:none;border-radius:2px 2px 0 0;"></div>
<div class="a" style="left:1142px;top:1043.5px;width:76px;height:1px;background:#5a5a64;"></div>
<svg style="left:1898px;top:1058px;" width="12" height="12" viewBox="0 0 12 12"><g fill="#9a9aa2"><rect x="9" y="0" width="2" height="2"/><rect x="5" y="4" width="2" height="2"/><rect x="9" y="4" width="2" height="2"/><rect x="1" y="8" width="2" height="2"/><rect x="5" y="8" width="2" height="2"/><rect x="9" y="8" width="2" height="2"/></g></svg>
<div class="a" style="left:49px;top:163px;width:375px;height:24px;background:#f7f7fc"></div>
<svg style="left:10.8px;top:116px" width="17" height="16" viewBox="0 0 17 16"><path d="M5.8 1.8H15.8V14.6H2.8V5.8" fill="#fff" stroke="#1414e0" stroke-width="1.2"/><rect x="0" y="0" width="5.8" height="5.8" fill="#1a6ce8"/><path d="M14 13L10.6 9.9" stroke="#1414e0" stroke-width="1.1" fill="none"/><path d="M8 7.5L11.8 8.5L9.4 11.2Z" fill="#1414e0"/></svg>
<div class="a" style="left:31px;top:112px;width:22px;height:20.8px;background:linear-gradient(#fbb874,#fdd2a0);border:1px solid #eda05a;border-radius:2.5px"></div>
<svg style="left:33px;top:114px" width="18" height="17" viewBox="0 0 18 17"><path d="M4.5 2.5Q6.5 1 8.8 3.2L6.8 12L1 10.5Z" fill="#2a5ef0" stroke="#1a3ec8" stroke-width="0.5"/><path d="M8 3.5Q10 1.5 12 2.8L17 8.5L12.5 11.5Z" fill="#3a6ef4" stroke="#1a3ec8" stroke-width="0.5"/><ellipse cx="3.9" cy="11.6" rx="3" ry="2.4" fill="#ffb010" stroke="#d08000" stroke-width="0.5"/><ellipse cx="14.8" cy="10" rx="2.7" ry="2.1" fill="#ffb010" stroke="#d08000" stroke-width="0.5"/><ellipse cx="3.4" cy="12.2" rx="1.3" ry="0.9" fill="#ffe870"/><ellipse cx="14.4" cy="10.5" rx="1.2" ry="0.8" fill="#ffe870"/></svg>
<div class="a" style="left:54px;top:112px;width:22px;height:20.8px;background:linear-gradient(#fbb874,#fdd2a0);border:1px solid #eda05a;border-radius:2.5px"></div>
<svg style="left:56px;top:114px" width="18" height="18" viewBox="0 0 18 18"><path d="M1.5 1V8H6M1.5 8V16H6" stroke="#1a34d8" stroke-width="1.3" fill="none"/><path d="M6 6l1.2 -1.5l1.2 1.5l1.2 -1.5l1.2 1.5M6 15l1.2 -1.5l1.2 1.5l1.2 -1.5l1.2 1.5" stroke="#1a5ce8" stroke-width="1" fill="none"/><text x="11.5" y="8" font-size="8.5" font-weight="bold" fill="#1a44d8" font-family="Liberation Sans">5</text><text x="11.5" y="17" font-size="8.5" font-weight="bold" fill="#1a44d8" font-family="Liberation Sans">7</text></svg>
<div class="a" style="left:77px;top:112px;width:22px;height:20.8px;background:linear-gradient(#fbb874,#fdd2a0);border:1px solid #eda05a;border-radius:2.5px"></div>
<svg style="left:80px;top:118px" width="17" height="10" viewBox="0 0 17 10"><path d="M4 1.5H15.5V8.5H4L1 5Z" fill="#fbc890" stroke="#d04040" stroke-width="1"/><circle cx="3" cy="5" r="2.2" fill="none" stroke="#7a5ad0" stroke-width="0.8"/><path d="M6 3H14" stroke="#ffe8d0" stroke-width="1.2"/></svg>
<div class="a" style="left:100px;top:112px;width:22px;height:20.8px;background:linear-gradient(#fbb874,#fdd2a0);border:1px solid #eda05a;border-radius:2.5px"></div>
<svg style="left:103px;top:115px" width="16" height="16" viewBox="0 0 16 16"><circle cx="2.5" cy="8" r="1.8" fill="none" stroke="#1a34d8" stroke-width="1.1"/><path d="M4.3 8H8M8 2.5V13.5M8 2.5H11M8 8H11M8 13.5H10" stroke="#1a34d8" stroke-width="1.1" fill="none"/><rect x="11" y="1" width="3.5" height="2.8" rx="0.2" fill="none" stroke="#1a34d8" stroke-width="1"/><rect x="11" y="6.6" width="3.5" height="2.8" rx="0.2" fill="none" stroke="#1a34d8" stroke-width="1"/><rect x="10" y="12" width="3.5" height="2.8" rx="0.2" fill="none" stroke="#1a34d8" stroke-width="1"/></svg>
<svg style="left:126px;top:115px" width="16" height="16" viewBox="0 0 16 16"><circle cx="13" cy="8" r="1.8" fill="none" stroke="#3a44c8" stroke-width="1"/><path d="M11.2 8H7.5M7.5 2.5V13.5M7.5 2.5H4.5M7.5 8H3.5M7.5 13.5H5.5" stroke="#3a44c8" stroke-width="1" fill="none"/><rect x="1" y="1" width="3.5" height="2.8" rx="0.2" fill="none" stroke="#3a44c8" stroke-width="0.9"/><rect x="0.5" y="6.6" width="3.5" height="2.8" rx="0.2" fill="none" stroke="#3a44c8" stroke-width="0.9"/><rect x="2.5" y="12" width="3.5" height="2.8" rx="0.2" fill="none" stroke="#3a44c8" stroke-width="0.9"/></svg>
<svg style="left:150px;top:115px" width="16.0" height="16.0" viewBox="0 0 16 16"><path d="M5 4.5H1.5V15H7" stroke="#1a1ae0" stroke-width="1.3" fill="none"/><path d="M5 2.2H10V0.2L14.5 3.2L10 6.2V4.2H5Z" fill="#f02010"/><path d="M8 15.5V11H5.8L9 6.5L12.2 11H10V15.5Z" fill="#20d020" stroke="#10a010" stroke-width="0.5"/></svg>
<div class="a" style="left:169px;top:112px;width:22px;height:20.8px;background:linear-gradient(#fbb874,#fdd2a0);border:1px solid #eda05a;border-radius:2.5px"></div>
<svg style="left:172px;top:114px" width="16.0" height="18.0" viewBox="0 0 16 18"><path d="M1.5 0.5V11.5H6" stroke="#1a34d8" stroke-width="1.3" fill="none"/><path d="M5.5 3.5L10.5 1L15 3.5V7L10.5 9.5L5.5 7Z" fill="#f8b820" stroke="#d08800" stroke-width="0.6"/><path d="M5.5 3.5L10.5 6L15 3.5L10.5 1Z" fill="#ffd860"/><path d="M6 11.5L10.5 9.3L15 11.5V15L10.5 17.5L6 15Z" fill="#f8b820" stroke="#d08800" stroke-width="0.6"/><path d="M6 11.5L10.5 14L15 11.5L10.5 9.3Z" fill="#ffd860"/></svg>
<svg style="left:194px;top:116px" width="17" height="15" viewBox="0 0 17 15"><path d="M1 4L5 0.5V2.8H16V5.2H5V7.5Z" fill="#ffa81a" stroke="#e08800" stroke-width="0.5"/><path d="M16 11L12 7.5V9.8H1V12.2H12V14.5Z" fill="#1a2cf0" stroke="#0a14b0" stroke-width="0.5"/></svg>
<svg style="left:218px;top:114px" width="16" height="19" viewBox="0 0 16 19"><path d="M1.5 2V18" stroke="#8a8ae0" stroke-width="1.1"/><path d="M1.5 2H5M1.5 8.5H4M1.5 15H4" stroke="#1a1ae0" stroke-width="1.2"/><path d="M6 2L7.5 2.0" stroke="#f02010" stroke-width="1.2" fill="none"/><path d="M10.5 2L7.5 3.8L7.5 0.2Z" fill="#f02010"/><path d="M15 8.5L12.0 8.5" stroke="#20c820" stroke-width="1.4" fill="none"/><path d="M8 8.5L12.0 6.1L12.0 10.9Z" fill="#20c820"/><path d="M6.5 18L6.5 14.5" stroke="#20c820" stroke-width="1.2" fill="none"/><path d="M6.5 11.5L8.3 14.5L4.7 14.5Z" fill="#20c820"/></svg>
<span class="t" style="left:404.5px;top:112.5px;font-size:19px;line-height:19px;font-weight:bold;color:#1a7ae8;transform:scaleX(.85);transform-origin:0 0">?</span>
<svg style="left:21px;top:166px" width="15" height="17" viewBox="0 0 15 17"><circle cx="7.5" cy="10" r="6" fill="#eef4fc" stroke="#1a44e0" stroke-width="1.3"/><path d="M7.5 10V5.5M7.5 10H11" stroke="#6a6a78" stroke-width="1"/><path d="M6 2H9M7.5 2V4M2 4.5L3.2 5.7M13 4.5L11.8 5.7" stroke="#1a44e0" stroke-width="1.1"/><path d="M3 8A5 5 0 0 1 12 8Q7.5 10.5 3 8Z" fill="#fff" opacity="0.8"/></svg>
<svg style="left:53px;top:166px" width="16" height="16" viewBox="0 0 16 16"><rect x="0.5" y="0.5" width="15" height="15" rx="1.5" fill="#dfe0f4" stroke="#8e90d8" stroke-width="1"/><path d="M4.5 3V13M8 3V13M11.5 3V13" stroke="#1a44e0" stroke-width="1.1"/><circle cx="4.5" cy="6" r="1.5" fill="#4ac0f8"/><circle cx="8" cy="10.5" r="1.5" fill="#4ac0f8"/><circle cx="11.5" cy="8" r="1.5" fill="#4ac0f8"/></svg>
<svg style="left:71px;top:194px" width="16" height="9" viewBox="0 0 16 9"><path d="M0.5 2.8H9.5V0.3L15.5 4.5L9.5 8.7V6.2H0.5Z" fill="#f02814" stroke="#c01000" stroke-width="0.5"/></svg>
<svg style="left:72px;top:207px" width="17" height="17" viewBox="0 0 17 17"><path d="M0.5 0.5H16.5V12.5L12.5 16.5H0.5Z" fill="#cfdcfa" stroke="#5f77e0" stroke-width="0.9"/><path d="M16.5 12.5H12.5V16.5Z" fill="#3a54d8"/><rect x="5.8" y="5" width="5.2" height="6.6" fill="#fff" stroke="#1a2cc0" stroke-width="1"/><path d="M8 7H11V9.5" stroke="#1a2cc0" stroke-width="0.8" fill="none"/><g fill="#fff" stroke="#2a3ed0" stroke-width="0.8"><rect x="1.8" y="6" width="2.2" height="4.8"/><rect x="12.8" y="6" width="2.2" height="4.8"/><rect x="6" y="1.6" width="2" height="1.8"/><rect x="9" y="1.6" width="2" height="1.8"/><rect x="6" y="13.3" width="2" height="1.8"/><rect x="9" y="13.3" width="2" height="1.8"/></g></svg>
<svg style="left:72px;top:225px" width="17" height="17" viewBox="0 0 17 17"><path d="M0.5 0.5H16.5V12.5L12.5 16.5H0.5Z" fill="#cfdcfa" stroke="#5f77e0" stroke-width="0.9"/><path d="M16.5 12.5H12.5V16.5Z" fill="#3a54d8"/><rect x="5.8" y="5" width="5.2" height="6.6" fill="#fff" stroke="#1a2cc0" stroke-width="1"/><path d="M8 7H11V9.5" stroke="#1a2cc0" stroke-width="0.8" fill="none"/><g fill="#fff" stroke="#2a3ed0" stroke-width="0.8"><rect x="1.8" y="6" width="2.2" height="4.8"/><rect x="12.8" y="6" width="2.2" height="4.8"/><rect x="6" y="1.6" width="2" height="1.8"/><rect x="9" y="1.6" width="2" height="1.8"/><rect x="6" y="13.3" width="2" height="1.8"/><rect x="9" y="13.3" width="2" height="1.8"/></g></svg>
<svg style="left:92px;top:243px" width="15.2" height="17.099999999999998" viewBox="0 0 16 18"><path d="M1.5 0.5V11.5H6" stroke="#1a34d8" stroke-width="1.3" fill="none"/><path d="M5.5 3.5L10.5 1L15 3.5V7L10.5 9.5L5.5 7Z" fill="#f8b820" stroke="#d08800" stroke-width="0.6"/><path d="M5.5 3.5L10.5 6L15 3.5L10.5 1Z" fill="#ffd860"/><path d="M6 11.5L10.5 9.3L15 11.5V15L10.5 17.5L6 15Z" fill="#f8b820" stroke="#d08800" stroke-width="0.6"/><path d="M6 11.5L10.5 14L15 11.5L10.5 9.3Z" fill="#ffd860"/></svg>
<svg style="left:91px;top:262px" width="16" height="16" viewBox="0 0 16 16"><path d="M5 4H12.5L15.5 7V15.5H5Z" fill="#fff" stroke="#1a5ce0" stroke-width="1"/><path d="M1 7Q1 1 4 1.5Q5.5 2 5.5 4Q6.5 3.5 7.5 4Q8 1.5 10 2Q12.5 3 12 7" fill="#8aa4e8" opacity="0.85"/><circle cx="3" cy="7" r="2.2" fill="#9ab0ec"/><circle cx="10" cy="7" r="2.2" fill="#9ab0ec"/></svg>
<svg style="left:91px;top:279px" width="17" height="17" viewBox="0 0 17 17"><path d="M0.5 0.5H16.5V13L13 16.5H0.5Z" fill="#e4ecfc" stroke="#5f77e0" stroke-width="0.9"/><path d="M2.5 3H6M2.5 14H6M4.3 3V14" stroke="#1a5ce0" stroke-width="1.1"/><path d="M4.3 3l-1.5 2.5h3zM4.3 14l-1.5 -2.5h3z" fill="#1a5ce0"/><path d="M9 13.5V6.5Q9 3.5 11.5 3.5Q14 3.5 14 6.5V13Q14 15 12.5 15Q11 15 11 13V8" stroke="#e0104a" stroke-width="1.2" fill="none"/></svg>
<svg style="left:91px;top:297px" width="17" height="17" viewBox="0 0 17 17"><path d="M0.5 0.5H16.5V12.5L12.5 16.5H0.5Z" fill="#dce6fb" stroke="#7f93ea" stroke-width="0.9"/><path d="M16.5 12.5H12.5V16.5Z" fill="#3a54d8"/><rect x="3" y="2.5" width="10" height="10" fill="#fff" stroke="#222" stroke-width="0.9" stroke-dasharray="1.5 1"/><path d="M6 5L12 12" stroke="#1a2cc0" stroke-width="1.2"/><path d="M5 4L9 5.5L6.5 8Z" fill="#1a2cc0"/></svg>
<svg style="left:91px;top:314px" width="16" height="20" viewBox="0 0 16 20"><path d="M0 9.5H16M4 4V15M10.5 0V20" stroke="#ff4a20" stroke-width="1" stroke-dasharray="3 1" fill="none"/><circle cx="4" cy="9.5" r="1.8" fill="none" stroke="#e0a0a0" stroke-width="0.8"/><circle cx="10.5" cy="9.5" r="2.8" fill="none" stroke="#e0a0a0" stroke-width="0.8"/></svg>
<svg style="left:91px;top:332px" width="16" height="20" viewBox="0 0 16 20"><path d="M0 9.5H16M4 4V15M10.5 0V20" stroke="#ff4a20" stroke-width="1" stroke-dasharray="3 1" fill="none"/><circle cx="4" cy="9.5" r="1.8" fill="none" stroke="#e0a0a0" stroke-width="0.8"/><circle cx="10.5" cy="9.5" r="2.8" fill="none" stroke="#e0a0a0" stroke-width="0.8"/></svg>
<svg style="left:91px;top:350px" width="16" height="20" viewBox="0 0 16 20"><path d="M0 9.5H16M4 4V15M10.5 0V20" stroke="#ff4a20" stroke-width="1" stroke-dasharray="3 1" fill="none"/><circle cx="4" cy="9.5" r="1.8" fill="none" stroke="#e0a0a0" stroke-width="0.8"/><circle cx="10.5" cy="9.5" r="2.8" fill="none" stroke="#e0a0a0" stroke-width="0.8"/></svg>
<svg style="left:91px;top:369px" width="17" height="17" viewBox="0 0 17 17"><path d="M1 1.5H8M4.5 1.5V9" stroke="#8a8ee8" stroke-width="1.3"/><path d="M4.5 9L9 14.5H15" stroke="#8a8ee8" stroke-width="1" fill="none"/><rect x="0.8" y="11" width="6" height="5" fill="#fff" stroke="#8a8ee8" stroke-width="1"/><path d="M9 12.5V16.5M15.5 12.5V16.5" stroke="#8a8ee8" stroke-width="1.2"/></svg>
<svg style="left:91px;top:387px" width="17" height="17" viewBox="0 0 17 17"><path d="M0.5 0.5H16.5V12.5L12.5 16.5H0.5Z" fill="#cfdcfa" stroke="#5f77e0" stroke-width="0.9"/><path d="M16.5 12.5H12.5V16.5Z" fill="#3a54d8"/><rect x="5.8" y="5" width="5.2" height="6.6" fill="#fff" stroke="#1a2cc0" stroke-width="1"/><path d="M8 7H11V9.5" stroke="#1a2cc0" stroke-width="0.8" fill="none"/><g fill="#fff" stroke="#2a3ed0" stroke-width="0.8"><rect x="1.8" y="6" width="2.2" height="4.8"/><rect x="12.8" y="6" width="2.2" height="4.8"/><rect x="6" y="1.6" width="2" height="1.8"/><rect x="9" y="1.6" width="2" height="1.8"/><rect x="6" y="13.3" width="2" height="1.8"/><rect x="9" y="13.3" width="2" height="1.8"/></g></svg>
<svg style="left:91px;top:405px" width="17" height="17" viewBox="0 0 17 17"><path d="M3 2L8 4.5L13 1.5L15 6L9 11L2 7Z" fill="#2a7ef0" stroke="#0a4ec8" stroke-width="0.6"/><path d="M8 4.5V10" stroke="#9ac4ff" stroke-width="0.8"/><path d="M2 12Q6 9 9 12Q6 16 2 14M9 12Q12 9 15 4" stroke="#d8a020" stroke-width="1.6" fill="none"/></svg>
<svg style="left:95px;top:426px" width="9" height="12" viewBox="0 0 9 12"><path d="M3 12V5H0.3L4.5 0.3L8.7 5H6V12Z" fill="#20d020" stroke="#10a010" stroke-width="0.5"/></svg>
<svg style="left:72px;top:441px" width="17" height="17" viewBox="0 0 17 17"><defs><pattern id="dh" width="2.2" height="2.2" patternUnits="userSpaceOnUse" patternTransform="rotate(-45)"><rect width="2.2" height="2.2" fill="#c4c8f4"/><line x1="0" y1="0" x2="2.2" y2="0" stroke="#5a5ee0" stroke-width="1"/></pattern></defs><rect x="0" y="0" width="17" height="17" fill="#ececf4"/><circle cx="8.5" cy="8.5" r="6.8" fill="url(#dh)" stroke="#f0922a" stroke-width="1.3"/></svg>
<svg style="left:72px;top:459px" width="17" height="17" viewBox="0 0 17 17"><defs><pattern id="dh" width="2.2" height="2.2" patternUnits="userSpaceOnUse" patternTransform="rotate(-45)"><rect width="2.2" height="2.2" fill="#c4c8f4"/><line x1="0" y1="0" x2="2.2" y2="0" stroke="#5a5ee0" stroke-width="1"/></pattern></defs><rect x="0" y="0" width="17" height="17" fill="#ececf4"/><circle cx="8.5" cy="8.5" r="6.8" fill="url(#dh)" stroke="#f0922a" stroke-width="1.3"/></svg>
<svg style="left:72px;top:477px" width="17" height="17" viewBox="0 0 17 17"><defs><pattern id="dh" width="2.2" height="2.2" patternUnits="userSpaceOnUse" patternTransform="rotate(-45)"><rect width="2.2" height="2.2" fill="#c4c8f4"/><line x1="0" y1="0" x2="2.2" y2="0" stroke="#5a5ee0" stroke-width="1"/></pattern></defs><rect x="0" y="0" width="17" height="17" fill="#ececf4"/><circle cx="8.5" cy="8.5" r="6.8" fill="url(#dh)" stroke="#f0922a" stroke-width="1.3"/></svg>
<svg style="left:72px;top:495px" width="17" height="17" viewBox="0 0 17 17"><defs><pattern id="dh" width="2.2" height="2.2" patternUnits="userSpaceOnUse" patternTransform="rotate(-45)"><rect width="2.2" height="2.2" fill="#c4c8f4"/><line x1="0" y1="0" x2="2.2" y2="0" stroke="#5a5ee0" stroke-width="1"/></pattern></defs><rect x="0" y="0" width="17" height="17" fill="#ececf4"/><circle cx="8.5" cy="8.5" r="6.8" fill="url(#dh)" stroke="#f0922a" stroke-width="1.3"/></svg>
<svg style="left:72px;top:513px" width="17" height="17" viewBox="0 0 17 17"><path d="M0.5 0.5H16.5V12.5L12.5 16.5H0.5Z" fill="#c9d8fa" stroke="#9fb0ee" stroke-width="0.9"/><path d="M16.5 12.5H12.5V16.5Z" fill="#3a54d8"/><rect x="5.8" y="5" width="5.4" height="6.8" fill="#fff" stroke="#1a2cc0" stroke-width="1.2"/><path d="M8 7H11V9.5" stroke="#1a2cc0" stroke-width="0.8" fill="none"/><g fill="#e8eeff" stroke="#b4c0f0" stroke-width="0.7"><rect x="1.8" y="6" width="2.2" height="4.8"/><rect x="12.8" y="6" width="2.2" height="4.8"/><rect x="6" y="1.6" width="2" height="1.8"/><rect x="9" y="1.6" width="2" height="1.8"/><rect x="6" y="13.3" width="2" height="1.8"/></g></svg>
<svg style="left:72px;top:531px" width="17" height="17" viewBox="0 0 17 17"><path d="M0.5 0.5H16.5V13L13 16.5H0.5Z" fill="#e4ecfc" stroke="#5f77e0" stroke-width="0.9"/><path d="M2.5 3H6M2.5 14H6M4.3 3V14" stroke="#1a5ce0" stroke-width="1.1"/><path d="M4.3 3l-1.5 2.5h3zM4.3 14l-1.5 -2.5h3z" fill="#1a5ce0"/><path d="M9 13.5V6.5Q9 3.5 11.5 3.5Q14 3.5 14 6.5V13Q14 15 12.5 15Q11 15 11 13V8" stroke="#e0104a" stroke-width="1.2" fill="none"/></svg>
<svg style="left:76px;top:552px" width="9" height="12" viewBox="0 0 9 12"><path d="M3 12V5H0.3L4.5 0.3L8.7 5H6V12Z" fill="#20d020" stroke="#10a010" stroke-width="0.5"/></svg>
<svg style="left:11px;top:1029px" width="15" height="16" viewBox="0 0 15 16"><path d="M2 1V8H5M2 8V14H5" stroke="#1a34d8" stroke-width="1.2" fill="none"/><rect x="5" y="1" width="4.5" height="4.5" fill="#2a6ef0"/><rect x="9" y="5.5" width="4.5" height="4.5" fill="#2a6ef0"/><rect x="5.5" y="11" width="4.5" height="4.5" fill="#2a6ef0"/></svg>
<svg style="left:68px;top:1028.5px" width="14.72" height="16.560000000000002" viewBox="0 0 16 18"><path d="M1.5 0.5V11.5H6" stroke="#1a34d8" stroke-width="1.3" fill="none"/><path d="M5.5 3.5L10.5 1L15 3.5V7L10.5 9.5L5.5 7Z" fill="#f8b820" stroke="#d08800" stroke-width="0.6"/><path d="M5.5 3.5L10.5 6L15 3.5L10.5 1Z" fill="#ffd860"/><path d="M6 11.5L10.5 9.3L15 11.5V15L10.5 17.5L6 15Z" fill="#f8b820" stroke="#d08800" stroke-width="0.6"/><path d="M6 11.5L10.5 14L15 11.5L10.5 9.3Z" fill="#ffd860"/></svg>
<svg style="left:136px;top:1029.5px" width="15.68" height="15.68" viewBox="0 0 16 16"><path d="M5 4.5H1.5V15H7" stroke="#1a1ae0" stroke-width="1.3" fill="none"/><path d="M5 2.2H10V0.2L14.5 3.2L10 6.2V4.2H5Z" fill="#f02010"/><path d="M8 15.5V11H5.8L9 6.5L12.2 11H10V15.5Z" fill="#20d020" stroke="#10a010" stroke-width="0.5"/></svg>
<svg style="left:517px;top:95px" width="16" height="16" viewBox="0 0 16 16"><path d="M0.5 0.5H15.5V12L12 15.5H0.5Z" fill="#cfe0fb" stroke="#5f7be0" stroke-width="0.9"/><path d="M15.5 12H12V15.5Z" fill="#3a54d8"/><rect x="5.3" y="4.6" width="5" height="6.6" fill="#fff" stroke="#1a2cc0" stroke-width="1"/><path d="M7.5 6.5H10.3V9" stroke="#1a2cc0" stroke-width="0.8" fill="none"/><g fill="#fff" stroke="#4a5ed8" stroke-width="0.7"><rect x="1.8" y="5.6" width="2" height="4.5"/><rect x="11.8" y="5.6" width="2" height="4.5"/><rect x="5.6" y="1.6" width="1.8" height="1.6"/><rect x="8.4" y="1.6" width="1.8" height="1.6"/><rect x="5.6" y="12.5" width="1.8" height="1.6"/><rect x="8.4" y="12.5" width="1.8" height="1.6"/></g></svg>
<svg style="left:430px;top:96px" width="16" height="16" viewBox="0 0 16 16"><path d="M1 4L10 1L15 11L6 14.5Z" fill="#2a6ef0" stroke="#c8d0e8" stroke-width="1"/><path d="M1 4L10 1L12 5Q6 5 2.5 8Z" fill="#8abaf8" opacity="0.9"/></svg>
<svg style="left:1233px;top:1051px" width="16" height="16" viewBox="0 0 16 16"><path d="M1 5L8 2L15 5L8 8Z" fill="#2a7ef0"/><path d="M1 8.5L8 11.5L15 8.5" stroke="#a8c4f0" stroke-width="1.6" fill="none"/><path d="M1 11.5L8 14.5L15 11.5" stroke="#c8d4ec" stroke-width="1.6" fill="none"/></svg></body></html>
